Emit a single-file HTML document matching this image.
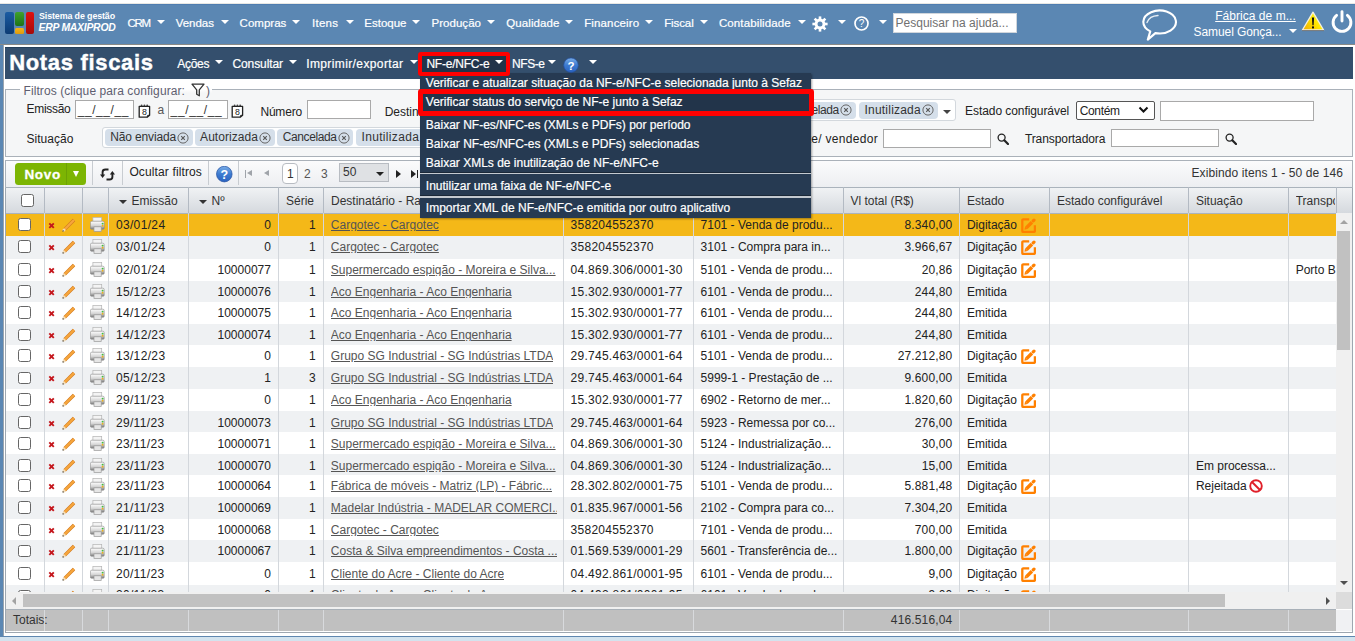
<!DOCTYPE html><html><head><meta charset="utf-8"><title>Notas fiscais</title><style>
*{margin:0;padding:0;box-sizing:border-box}
html,body{width:1355px;height:641px;overflow:hidden;background:#fff;font-family:"Liberation Sans", sans-serif;position:relative}
.abs{position:absolute}
.t{position:absolute;white-space:nowrap;line-height:1}
</style></head><body>
<div class="abs" style="left:0px;top:0px;width:1355px;height:4px;background:#fff"></div>
<div class="abs" style="left:0px;top:3px;width:1355px;height:1px;background:#e8e8e4"></div>
<div class="abs" style="left:0px;top:4px;width:1355px;height:41px;background:#5b87b3"></div>
<div class="abs" style="left:0px;top:4px;width:1355px;height:1px;background:#4f7db0"></div>
<div class="abs" style="left:5px;top:12px;width:8.5px;height:21.5px;border-radius:2px;background:linear-gradient(#1b5ca3,#0c3b74)"></div>
<div class="abs" style="left:15.3px;top:12px;width:8.4px;height:14px;border-radius:2px;background:linear-gradient(#3fa22c,#1d7318)"></div>
<div class="abs" style="left:15.3px;top:27.5px;width:8.4px;height:6.2px;border-radius:1.5px;background:linear-gradient(#f5b516,#dc9a10)"></div>
<div class="abs" style="left:25.7px;top:12px;width:8.3px;height:21.5px;border-radius:2px;background:linear-gradient(#e0120f,#a50a0a)"></div>
<div class="t" id="f0" style="top:11.77px;font-size:8.9px;color:#fff;left:39.00px;font-weight:bold;letter-spacing:-0.114px;">Sistema de gestão</div>
<div class="t" id="f1" style="top:22.90px;font-size:10.4px;color:#fff;left:38.50px;font-weight:bold;font-style:italic;letter-spacing:-0.240px;">ERP MAXIPROD</div>
<div class="t" id="f2" style="top:17.77px;font-size:11.5px;color:#fff;left:127.40px;letter-spacing:-1.201px;-webkit-text-stroke:0.2px #fff;">CRM</div>
<div class="abs" style="left:157px;top:19.6px;width:0;height:0;border-left:4.0px solid transparent;border-right:4.0px solid transparent;border-top:4px solid #fff"></div>
<div class="t" id="f3" style="top:17.77px;font-size:11.5px;color:#fff;left:175.70px;letter-spacing:-0.012px;-webkit-text-stroke:0.2px #fff;">Vendas</div>
<div class="abs" style="left:221px;top:19.6px;width:0;height:0;border-left:4.0px solid transparent;border-right:4.0px solid transparent;border-top:4px solid #fff"></div>
<div class="t" id="f4" style="top:17.77px;font-size:11.5px;color:#fff;left:239.60px;letter-spacing:0.021px;-webkit-text-stroke:0.2px #fff;">Compras</div>
<div class="abs" style="left:292px;top:19.6px;width:0;height:0;border-left:4.0px solid transparent;border-right:4.0px solid transparent;border-top:4px solid #fff"></div>
<div class="t" id="f5" style="top:17.77px;font-size:11.5px;color:#fff;left:311.90px;letter-spacing:0.312px;-webkit-text-stroke:0.2px #fff;">Itens</div>
<div class="abs" style="left:345.5px;top:19.6px;width:0;height:0;border-left:4.0px solid transparent;border-right:4.0px solid transparent;border-top:4px solid #fff"></div>
<div class="t" id="f6" style="top:17.77px;font-size:11.5px;color:#fff;left:364.30px;letter-spacing:-0.000px;-webkit-text-stroke:0.2px #fff;">Estoque</div>
<div class="abs" style="left:412px;top:19.6px;width:0;height:0;border-left:4.0px solid transparent;border-right:4.0px solid transparent;border-top:4px solid #fff"></div>
<div class="t" id="f7" style="top:17.77px;font-size:11.5px;color:#fff;left:431.50px;letter-spacing:0.033px;-webkit-text-stroke:0.2px #fff;">Produção</div>
<div class="abs" style="left:487px;top:19.6px;width:0;height:0;border-left:4.0px solid transparent;border-right:4.0px solid transparent;border-top:4px solid #fff"></div>
<div class="t" id="f8" style="top:17.77px;font-size:11.5px;color:#fff;left:506.30px;letter-spacing:0.096px;-webkit-text-stroke:0.2px #fff;">Qualidade</div>
<div class="abs" style="left:565.4px;top:19.6px;width:0;height:0;border-left:4.0px solid transparent;border-right:4.0px solid transparent;border-top:4px solid #fff"></div>
<div class="t" id="f9" style="top:17.77px;font-size:11.5px;color:#fff;left:584.20px;letter-spacing:0.140px;-webkit-text-stroke:0.2px #fff;">Financeiro</div>
<div class="abs" style="left:645px;top:19.6px;width:0;height:0;border-left:4.0px solid transparent;border-right:4.0px solid transparent;border-top:4px solid #fff"></div>
<div class="t" id="f10" style="top:17.77px;font-size:11.5px;color:#fff;left:664.20px;letter-spacing:-0.105px;-webkit-text-stroke:0.2px #fff;">Fiscal</div>
<div class="abs" style="left:700px;top:19.6px;width:0;height:0;border-left:4.0px solid transparent;border-right:4.0px solid transparent;border-top:4px solid #fff"></div>
<div class="t" id="f11" style="top:17.77px;font-size:11.5px;color:#fff;left:718.90px;letter-spacing:0.127px;-webkit-text-stroke:0.2px #fff;">Contabilidade</div>
<div class="abs" style="left:797.5px;top:19.6px;width:0;height:0;border-left:4.0px solid transparent;border-right:4.0px solid transparent;border-top:4px solid #fff"></div>
<svg class="abs" style="left:812px;top:16px" width="16" height="16" viewBox="0 0 16 16"><g fill="#fff"><circle cx="8" cy="8" r="5.4"/>
<g id="gt"><rect x="6.7" y="0.4" width="2.6" height="3.4"/><rect x="6.7" y="12.2" width="2.6" height="3.4"/><rect x="0.4" y="6.7" width="3.4" height="2.6"/><rect x="12.2" y="6.7" width="3.4" height="2.6"/></g>
<g transform="rotate(45 8 8)"><rect x="6.7" y="0.4" width="2.6" height="3.4"/><rect x="6.7" y="12.2" width="2.6" height="3.4"/><rect x="0.4" y="6.7" width="3.4" height="2.6"/><rect x="12.2" y="6.7" width="3.4" height="2.6"/></g></g>
<circle cx="8" cy="8" r="2.5" fill="#5b87b3"/></svg>
<div class="abs" style="left:838px;top:19.6px;width:0;height:0;border-left:4.0px solid transparent;border-right:4.0px solid transparent;border-top:4px solid #fff"></div>
<svg class="abs" style="left:853.5px;top:16.3px" width="15" height="15" viewBox="0 0 15 15"><circle cx="7.5" cy="7.5" r="6.5" fill="none" stroke="#fff" stroke-width="1.7"/>
<text x="7.6" y="11.2" text-anchor="middle" font-family="Liberation Sans" font-size="10" fill="#fff">?</text></svg>
<div class="abs" style="left:879px;top:19.6px;width:0;height:0;border-left:4.0px solid transparent;border-right:4.0px solid transparent;border-top:4px solid #fff"></div>
<div class="abs" style="left:893px;top:13px;width:124px;height:20px;background:#fff;border:1px solid #d0d6dc"></div>
<div class="t" id="f12" style="top:16.84px;font-size:12px;color:#707070;left:895.50px;letter-spacing:0.012px;">Pesquisar na ajuda...</div>
<svg class="abs" style="left:1141px;top:8px" width="38" height="34" viewBox="0 0 38 34"><path d="M14.4 25.1 A16.3 11.5 0 1 0 9.25 23.4 L6.8 31.6 L14.4 25.1 Z" fill="none" stroke="#fff" stroke-width="2.1" stroke-linejoin="round"/>
<path d="M6 14.5 C7.5 10.5 11.5 7.8 17 7.5" fill="none" stroke="#fff" stroke-width="1.4" stroke-linecap="round" opacity="0.85"/></svg>
<div class="t" id="f13" style="top:9.64px;font-size:12px;color:#fff;left:1215.20px;letter-spacing:0.038px;text-decoration:underline;">Fábrica de m...</div>
<div class="t" id="f14" style="top:26.24px;font-size:12px;color:#fff;left:1193.60px;letter-spacing:-0.093px;">Samuel Gonça...</div>
<div class="abs" style="left:1288.5px;top:29px;width:0;height:0;border-left:4.0px solid transparent;border-right:4.0px solid transparent;border-top:4.5px solid #fff"></div>
<svg class="abs" style="left:1301px;top:10.5px" width="24" height="21" viewBox="0 0 24 21"><defs><linearGradient id="wg" x1="0" y1="1" x2="1" y2="0.3"><stop offset="0" stop-color="#f0a800"/><stop offset="0.6" stop-color="#ffe600"/><stop offset="1" stop-color="#ffff40"/></linearGradient></defs>
<path d="M12 1.2 L22.6 19 L1.4 19 Z" fill="url(#wg)" stroke="#f4f0e0" stroke-width="1.3" stroke-linejoin="round"/><path d="M1 19.6 L23 19.6" stroke="#6a6a6a" stroke-width="0.9"/><path d="M10.9 6.5 L13.1 6.5 L12.6 14.3 L11.4 14.3 Z" fill="#111"/><rect x="11" y="15.4" width="2" height="2" fill="#111"/></svg>
<svg class="abs" style="left:1331px;top:10px" width="22" height="24" viewBox="0 0 22 24"><path d="M5.6 5.4 A8.9 8.9 0 1 0 16.4 5.4" fill="none" stroke="#fff" stroke-width="2.9" stroke-linecap="round"/><line x1="11" y1="1.7" x2="11" y2="11" stroke="#fff" stroke-width="2.9" stroke-linecap="round"/></svg>
<div class="abs" style="left:0px;top:45px;width:2.5px;height:596px;background:#5b87b3"></div>
<div class="abs" style="left:2.5px;top:45px;width:0.8px;height:591px;background:#9aa4ae"></div>
<div class="abs" style="left:0px;top:44.3px;width:1355px;height:0.8px;background:#8a8a86"></div>
<div class="abs" style="left:0px;top:635.5px;width:1355px;height:1.5px;background:#5f87b0"></div>
<div class="abs" style="left:0px;top:637px;width:1355px;height:4px;background:#d3e3ee"></div>
<div class="abs" style="left:5px;top:47px;width:1348px;height:31.7px;background:#344f6d"></div>
<div class="abs" style="left:5px;top:47px;width:1348px;height:1px;background:#24405c"></div>
<div class="t" id="f15" style="top:51.98px;font-size:22px;color:#fff;left:9.20px;font-weight:bold;letter-spacing:0.674px;-webkit-text-stroke:0.4px #fff;">Notas fiscais</div>
<div class="abs" style="left:5px;top:89px;width:1348px;height:67.6px;background:#f5f6f7;border:1px solid #aab1b9"></div>
<div class="abs" style="left:20px;top:85px;width:191.5px;height:6px;background:#fff"></div>
<div class="abs" style="left:20px;top:89px;width:191.5px;height:4px;background:linear-gradient(#fff,#f5f6f7)"></div>
<div class="t" id="f16" style="top:84.84px;font-size:12px;color:#5e5e70;left:23.50px;letter-spacing:0.086px;">Filtros (clique para configurar:</div>
<svg class="abs" style="left:190.5px;top:83px" width="14" height="14" viewBox="0 0 14 14"><path d="M1 1.2 L13 1.2 L8.3 6.8 L8.3 12.8 L5.7 11.3 L5.7 6.8 Z" fill="none" stroke="#333" stroke-width="1.3" stroke-linejoin="round"/></svg>
<div class="t" style="top:85.34px;font-size:12px;color:#5e5e70;left:206.00px;">)</div>
<div class="t" id="f17" style="top:103.24px;font-size:12px;color:#222;left:26.50px;letter-spacing:-0.288px;">Emissão</div>
<div class="abs" style="left:75.2px;top:100.3px;width:59.2px;height:19.1px;background:#fff;border:1px solid #a9a9a9"></div>
<div class="t" id="f18" style="top:103.84px;font-size:12px;color:#333;left:77.70px;letter-spacing:0.560px;">__/__/__</div>
<svg class="abs" style="left:137.8px;top:104px" width="13" height="14" viewBox="0 0 13 14"><path d="M1.2 2.4 L11.6 2.4 L11.6 11.2 L9.2 13.2 L1.2 13.2 Z" fill="#fff" stroke="#222" stroke-width="1.3" stroke-linejoin="round"/><path d="M9.2 13.2 L9.6 11.4 L11.6 11.2" fill="none" stroke="#222" stroke-width="1"/><circle cx="3.6" cy="1.3" r="0.9" fill="#444"/><circle cx="6.4" cy="1.3" r="0.9" fill="#444"/><circle cx="9.2" cy="1.3" r="0.9" fill="#444"/><text x="6.4" y="10.9" text-anchor="middle" font-family="Liberation Sans" font-size="8.8" fill="#222">8</text></svg>
<div class="t" style="top:103.84px;font-size:12px;color:#555;left:157.50px;">a</div>
<div class="abs" style="left:168.1px;top:100.3px;width:59.8px;height:19.1px;background:#fff;border:1px solid #a9a9a9"></div>
<div class="t" id="f19" style="top:103.84px;font-size:12px;color:#333;left:170.60px;letter-spacing:0.635px;">__/__/__</div>
<svg class="abs" style="left:230.8px;top:104px" width="13" height="14" viewBox="0 0 13 14"><path d="M1.2 2.4 L11.6 2.4 L11.6 11.2 L9.2 13.2 L1.2 13.2 Z" fill="#fff" stroke="#222" stroke-width="1.3" stroke-linejoin="round"/><path d="M9.2 13.2 L9.6 11.4 L11.6 11.2" fill="none" stroke="#222" stroke-width="1"/><circle cx="3.6" cy="1.3" r="0.9" fill="#444"/><circle cx="6.4" cy="1.3" r="0.9" fill="#444"/><circle cx="9.2" cy="1.3" r="0.9" fill="#444"/><text x="6.4" y="10.9" text-anchor="middle" font-family="Liberation Sans" font-size="8.8" fill="#222">8</text></svg>
<div class="t" id="f20" style="top:105.54px;font-size:12px;color:#222;left:260.40px;letter-spacing:-0.181px;">Número</div>
<div class="abs" style="left:307px;top:100.3px;width:63.5px;height:19.1px;background:#fff;border:1px solid #a9a9a9"></div>
<div class="t" style="top:105.54px;font-size:12px;color:#222;left:384.70px;">Destinatário</div>
<div class="abs" style="left:700px;top:99.2px;width:256px;height:22.1px;background:#fff;border:1px solid #d3d8dd;border-radius:3px"></div>
<div class="abs" style="left:780px;top:102.2px;width:75.5px;height:16.5px;background:#d5dfea;border-radius:4px"></div>
<div class="t" id="f21" style="top:103.54px;font-size:12px;color:#333;left:785.30px;letter-spacing:-0.442px;">Cancelada</div>
<svg class="abs" style="left:839.90px;top:104.45px" width="12" height="12" viewBox="0 0 12 12"><circle cx="6" cy="6" r="5.1" fill="none" stroke="#666" stroke-width="1"/><path d="M4.2 4.2 L7.8 7.8 M7.8 4.2 L4.2 7.8" stroke="#555" stroke-width="1.1"/></svg>
<div class="abs" style="left:859.2px;top:102.2px;width:78.5px;height:16.5px;background:#d5dfea;border-radius:4px"></div>
<div class="t" id="f22" style="top:103.54px;font-size:12px;color:#333;left:864.50px;letter-spacing:0.214px;">Inutilizada</div>
<svg class="abs" style="left:922.10px;top:104.45px" width="12" height="12" viewBox="0 0 12 12"><circle cx="6" cy="6" r="5.1" fill="none" stroke="#666" stroke-width="1"/><path d="M4.2 4.2 L7.8 7.8 M7.8 4.2 L4.2 7.8" stroke="#555" stroke-width="1.1"/></svg>
<div class="abs" style="left:943px;top:110.2px;width:0;height:0;border-left:4.0px solid transparent;border-right:4.0px solid transparent;border-top:4px solid #444"></div>
<div class="t" id="f23" style="top:104.94px;font-size:12px;color:#222;left:965.10px;letter-spacing:-0.074px;">Estado configurável</div>
<div class="abs" style="left:1075.5px;top:100.5px;width:79px;height:19px;background:#fff;border:1px solid #555;border-radius:2px"></div>
<div class="t" id="f24" style="top:104.84px;font-size:12px;color:#222;left:1079.70px;letter-spacing:-0.339px;">Contém</div>
<svg class="abs" style="left:1137.5px;top:106px" width="11" height="8" viewBox="0 0 11 8"><path d="M1.5 1.5 L5.5 5.5 L9.5 1.5" fill="none" stroke="#111" stroke-width="2"/></svg>
<div class="abs" style="left:1160.3px;top:101.3px;width:153.3px;height:19.4px;background:#fff;border:1px solid #a9a9a9"></div>
<div class="t" id="f25" style="top:133.04px;font-size:12px;color:#222;left:26.50px;letter-spacing:0.037px;">Situação</div>
<div class="abs" style="left:101.6px;top:126.6px;width:700px;height:21.8px;background:#fff;border:1px solid #d3d8dd;border-radius:3px"></div>
<div class="abs" style="left:105.0px;top:129px;width:87.8px;height:17px;background:#d5dfea;border-radius:4px"></div>
<div class="t" id="f26" style="top:130.64px;font-size:12px;color:#333;left:110.30px;letter-spacing:-0.154px;">Não enviada</div>
<svg class="abs" style="left:177.20px;top:131.50px" width="12" height="12" viewBox="0 0 12 12"><circle cx="6" cy="6" r="5.1" fill="none" stroke="#666" stroke-width="1"/><path d="M4.2 4.2 L7.8 7.8 M7.8 4.2 L4.2 7.8" stroke="#555" stroke-width="1.1"/></svg>
<div class="abs" style="left:194.8px;top:129px;width:79.9px;height:17px;background:#d5dfea;border-radius:4px"></div>
<div class="t" id="f27" style="top:130.64px;font-size:12px;color:#333;left:200.10px;letter-spacing:0.042px;">Autorizada</div>
<svg class="abs" style="left:259.10px;top:131.50px" width="12" height="12" viewBox="0 0 12 12"><circle cx="6" cy="6" r="5.1" fill="none" stroke="#666" stroke-width="1"/><path d="M4.2 4.2 L7.8 7.8 M7.8 4.2 L4.2 7.8" stroke="#555" stroke-width="1.1"/></svg>
<div class="abs" style="left:277.4px;top:129px;width:76.0px;height:17px;background:#d5dfea;border-radius:4px"></div>
<div class="t" id="f28" style="top:130.64px;font-size:12px;color:#333;left:282.70px;letter-spacing:-0.386px;">Cancelada</div>
<svg class="abs" style="left:337.80px;top:131.50px" width="12" height="12" viewBox="0 0 12 12"><circle cx="6" cy="6" r="5.1" fill="none" stroke="#666" stroke-width="1"/><path d="M4.2 4.2 L7.8 7.8 M7.8 4.2 L4.2 7.8" stroke="#555" stroke-width="1.1"/></svg>
<div class="abs" style="left:356.2px;top:129px;width:79.8px;height:17px;background:#d5dfea;border-radius:4px"></div>
<div class="t" id="f29" style="top:130.64px;font-size:12px;color:#333;left:361.50px;letter-spacing:0.332px;">Inutilizada</div>
<svg class="abs" style="left:420.40px;top:131.50px" width="12" height="12" viewBox="0 0 12 12"><circle cx="6" cy="6" r="5.1" fill="none" stroke="#666" stroke-width="1"/><path d="M4.2 4.2 L7.8 7.8 M7.8 4.2 L4.2 7.8" stroke="#555" stroke-width="1.1"/></svg>
<div class="t" style="top:133.14px;font-size:12px;color:#222;right:477.00px;letter-spacing:0.300px;">Representante/ vendedor</div>
<div class="abs" style="left:882.5px;top:128.5px;width:108px;height:19.1px;background:#fff;border:1px solid #a9a9a9"></div>
<svg class="abs" style="left:996.5px;top:133px" width="12" height="12" viewBox="0 0 12 12"><circle cx="4.6" cy="4.6" r="3.5" fill="none" stroke="#222" stroke-width="1.3"/><line x1="7.3" y1="7.3" x2="11" y2="11" stroke="#222" stroke-width="2.2" stroke-linecap="round"/></svg>
<div class="t" id="f30" style="top:133.14px;font-size:12px;color:#222;left:1024.90px;letter-spacing:-0.079px;">Transportadora</div>
<div class="abs" style="left:1110.6px;top:128.5px;width:108.2px;height:18.6px;background:#fff;border:1px solid #a9a9a9"></div>
<svg class="abs" style="left:1224.8px;top:133px" width="12" height="12" viewBox="0 0 12 12"><circle cx="4.6" cy="4.6" r="3.5" fill="none" stroke="#222" stroke-width="1.3"/><line x1="7.3" y1="7.3" x2="11" y2="11" stroke="#222" stroke-width="2.2" stroke-linecap="round"/></svg>
<div class="abs" style="left:5px;top:159.5px;width:1348px;height:28.5px;background:linear-gradient(#fbfbfc,#eceef1);border:1px solid #aab1b9;border-bottom:none"></div>
<div class="abs" style="left:15px;top:163px;width:70.7px;height:21.6px;background:#7cb503;border-radius:3.5px"></div>
<div class="abs" style="left:66px;top:163px;width:1px;height:21.6px;background:#6da204"></div>
<div class="t" id="f31" style="top:167.57px;font-size:13.5px;color:#fff;left:24.40px;font-weight:bold;letter-spacing:0.688px;-webkit-text-stroke:0.3px #fff;">Novo</div>
<div class="abs" style="left:72.5px;top:171px;width:0;height:0;border-left:3.5px solid transparent;border-right:3.5px solid transparent;border-top:6px solid #fff"></div>
<div class="abs" style="left:92px;top:160.5px;width:1px;height:24px;background:#c8ccd1"></div>
<div class="abs" style="left:122px;top:160.5px;width:1px;height:24px;background:#c8ccd1"></div>
<div class="abs" style="left:208px;top:160.5px;width:1px;height:24px;background:#c8ccd1"></div>
<div class="abs" style="left:238px;top:160.5px;width:1px;height:24px;background:#c8ccd1"></div>
<svg class="abs" style="left:99.5px;top:166.5px" width="15" height="15" viewBox="0 0 15 15"><path d="M2.6 8.5 L2.6 5 C2.6 3.3 4 2.5 5.5 2.5 L8.5 2.5" fill="none" stroke="#222" stroke-width="1.9"/><path d="M0 7.5 L2.6 11 L5.2 7.5 Z" fill="#222"/>
<path d="M12.4 6.5 L12.4 10 C12.4 11.7 11 12.5 9.5 12.5 L6.5 12.5" fill="none" stroke="#222" stroke-width="1.9"/><path d="M9.8 7.5 L12.4 4 L15 7.5 Z" fill="#222"/></svg>
<div class="t" id="f32" style="top:166.34px;font-size:12px;color:#222;left:129.40px;letter-spacing:0.127px;">Ocultar filtros</div>
<svg class="abs" style="left:215.5px;top:165.8px" width="17" height="17" viewBox="0 0 17 17"><defs><linearGradient id="hg2" x1="0" y1="0" x2="0" y2="1"><stop offset="0" stop-color="#7aaee8"/><stop offset="0.5" stop-color="#3d7bd0"/><stop offset="1" stop-color="#2a62c0"/></linearGradient></defs><circle cx="8.3" cy="8.1" r="7.8" fill="url(#hg2)" stroke="#2450a0" stroke-width="0.7"/><text x="8.3" y="12.8" text-anchor="middle" font-family="Liberation Sans" font-size="12.5" font-weight="bold" fill="#fff">?</text></svg>
<div class="abs" style="left:244.6px;top:170px;width:1.5px;height:7.5px;background:#a0a4aa"></div>
<div class="abs" style="left:246.5px;top:170px;width:0;height:0;border-top:3.75px solid transparent;border-bottom:3.75px solid transparent;border-right:5px solid #a0a4aa"></div>
<div class="abs" style="left:264px;top:170px;width:0;height:0;border-top:3.75px solid transparent;border-bottom:3.75px solid transparent;border-right:5px solid #a0a4aa"></div>
<div class="abs" style="left:282.3px;top:163.1px;width:16.2px;height:21.1px;background:#fff;border:1px solid #b8bcc2;border-radius:4px"></div>
<div class="t" style="top:167.84px;font-size:12px;color:#333;left:287.00px;">1</div>
<div class="t" style="top:167.84px;font-size:12px;color:#555;left:304.00px;">2</div>
<div class="t" style="top:167.84px;font-size:12px;color:#555;left:321.00px;">3</div>
<div class="abs" style="left:339px;top:163px;width:49.6px;height:18.5px;background:#dfe1e4;border:1px solid #b8bcc2"></div>
<div class="t" style="top:166.34px;font-size:12px;color:#333;left:343.00px;">50</div>
<div class="abs" style="left:375.5px;top:172px;width:0;height:0;border-left:4.0px solid transparent;border-right:4.0px solid transparent;border-top:4.5px solid #222"></div>
<div class="abs" style="left:396px;top:170px;width:0;height:0;border-top:4px solid transparent;border-bottom:4px solid transparent;border-left:5px solid #222"></div>
<div class="abs" style="left:411px;top:170px;width:0;height:0;border-top:4px solid transparent;border-bottom:4px solid transparent;border-left:5px solid #222"></div>
<div class="abs" style="left:416.5px;top:170px;width:1.5px;height:8px;background:#222"></div>
<div class="t" id="f33" style="top:167.04px;font-size:12px;color:#333;left:1191.50px;letter-spacing:0.101px;">Exibindo itens 1 - 50 de 146</div>
<div class="abs" style="left:5px;top:187px;width:1348px;height:27px;background:linear-gradient(#f0f2f4,#d5d9de);border-top:1px solid #aab3bc;border-bottom:1px solid #aab3bc"></div>
<div class="abs" style="left:44px;top:187px;width:1px;height:27px;background:#b3bac3"></div>
<div class="abs" style="left:82px;top:187px;width:1px;height:27px;background:#b3bac3"></div>
<div class="abs" style="left:108px;top:187px;width:1px;height:27px;background:#b3bac3"></div>
<div class="abs" style="left:188px;top:187px;width:1px;height:27px;background:#b3bac3"></div>
<div class="abs" style="left:278px;top:187px;width:1px;height:27px;background:#b3bac3"></div>
<div class="abs" style="left:323px;top:187px;width:1px;height:27px;background:#b3bac3"></div>
<div class="abs" style="left:563px;top:187px;width:1px;height:27px;background:#b3bac3"></div>
<div class="abs" style="left:693px;top:187px;width:1px;height:27px;background:#b3bac3"></div>
<div class="abs" style="left:843px;top:187px;width:1px;height:27px;background:#b3bac3"></div>
<div class="abs" style="left:959px;top:187px;width:1px;height:27px;background:#b3bac3"></div>
<div class="abs" style="left:1049px;top:187px;width:1px;height:27px;background:#b3bac3"></div>
<div class="abs" style="left:1188px;top:187px;width:1px;height:27px;background:#b3bac3"></div>
<div class="abs" style="left:1288px;top:187px;width:1px;height:27px;background:#b3bac3"></div>
<div class="abs" style="left:1335.5px;top:187px;width:1px;height:27px;background:#b3bac3"></div>
<div class="abs" style="left:21.3px;top:194px;width:12.6px;height:12.7px;background:#fff;border:1px solid #666;border-radius:2.5px"></div>
<div class="abs" style="left:118.69999999999999px;top:200px;width:0;height:0;border-left:4.5px solid transparent;border-right:4.5px solid transparent;border-top:4.5px solid #333"></div>
<div class="t" style="top:195.14px;font-size:12px;color:#333;left:131.60px;">Emissão</div>
<div class="abs" style="left:198.7px;top:200px;width:0;height:0;border-left:4.5px solid transparent;border-right:4.5px solid transparent;border-top:4.5px solid #333"></div>
<div class="t" style="top:195.14px;font-size:12px;color:#333;left:211.60px;">Nº</div>
<div class="t" style="top:195.14px;font-size:12px;color:#333;left:286.00px;">Série</div>
<div class="t" style="top:195.14px;font-size:12px;color:#333;left:331.00px;">Destinatário - Razão social</div>
<div class="t" style="top:195.14px;font-size:12px;color:#333;left:571.00px;">CNPJ/CPF</div>
<div class="t" style="top:195.14px;font-size:12px;color:#333;left:701.00px;">Natureza</div>
<div class="t" style="top:195.14px;font-size:12px;color:#333;left:850.50px;">Vl total (R$)</div>
<div class="t" style="top:195.14px;font-size:12px;color:#333;left:966.90px;">Estado</div>
<div class="t" style="top:195.14px;font-size:12px;color:#333;left:1057.00px;">Estado configurável</div>
<div class="t" style="top:195.14px;font-size:12px;color:#333;left:1195.90px;">Situação</div>
<div class="t" style="top:195.14px;font-size:12px;color:#333;left:1295.70px;width:39.5px;overflow:hidden;">Transportadora</div>
<div class="abs" style="left:0;top:213.0px;width:1335.5px;height:379.0px;overflow:hidden">
<div class="abs" style="left:5.5px;top:1.0px;width:1330px;height:22px;background:#f4b818"></div>
<div class="abs" style="left:5.5px;top:23.0px;width:1330px;height:23px;background:#eff1f3"></div>
<div class="abs" style="left:5.5px;top:46.0px;width:1330px;height:22px;background:#ffffff"></div>
<div class="abs" style="left:5.5px;top:68.0px;width:1330px;height:21px;background:#eff1f3"></div>
<div class="abs" style="left:5.5px;top:89.0px;width:1330px;height:22px;background:#ffffff"></div>
<div class="abs" style="left:5.5px;top:111.0px;width:1330px;height:21px;background:#eff1f3"></div>
<div class="abs" style="left:5.5px;top:132.0px;width:1330px;height:22px;background:#ffffff"></div>
<div class="abs" style="left:5.5px;top:154.0px;width:1330px;height:22px;background:#eff1f3"></div>
<div class="abs" style="left:5.5px;top:176.0px;width:1330px;height:22px;background:#ffffff"></div>
<div class="abs" style="left:5.5px;top:198.0px;width:1330px;height:21px;background:#eff1f3"></div>
<div class="abs" style="left:5.5px;top:219.0px;width:1330px;height:22px;background:#ffffff"></div>
<div class="abs" style="left:5.5px;top:241.0px;width:1330px;height:21px;background:#eff1f3"></div>
<div class="abs" style="left:5.5px;top:262.0px;width:1330px;height:22px;background:#ffffff"></div>
<div class="abs" style="left:5.5px;top:284.0px;width:1330px;height:22px;background:#eff1f3"></div>
<div class="abs" style="left:5.5px;top:306.0px;width:1330px;height:21px;background:#ffffff"></div>
<div class="abs" style="left:5.5px;top:327.0px;width:1330px;height:22px;background:#eff1f3"></div>
<div class="abs" style="left:5.5px;top:349.0px;width:1330px;height:23px;background:#ffffff"></div>
<div class="abs" style="left:5.5px;top:372.0px;width:1330px;height:22px;background:#eff1f3"></div>
<div class="abs" style="left:44px;top:0px;width:1px;height:379.0px;background:#d3d7dc"></div>
<div class="abs" style="left:82px;top:0px;width:1px;height:379.0px;background:#d3d7dc"></div>
<div class="abs" style="left:108px;top:0px;width:1px;height:379.0px;background:#d3d7dc"></div>
<div class="abs" style="left:188px;top:0px;width:1px;height:379.0px;background:#d3d7dc"></div>
<div class="abs" style="left:278px;top:0px;width:1px;height:379.0px;background:#d3d7dc"></div>
<div class="abs" style="left:323px;top:0px;width:1px;height:379.0px;background:#d3d7dc"></div>
<div class="abs" style="left:563px;top:0px;width:1px;height:379.0px;background:#d3d7dc"></div>
<div class="abs" style="left:693px;top:0px;width:1px;height:379.0px;background:#d3d7dc"></div>
<div class="abs" style="left:843px;top:0px;width:1px;height:379.0px;background:#d3d7dc"></div>
<div class="abs" style="left:959px;top:0px;width:1px;height:379.0px;background:#d3d7dc"></div>
<div class="abs" style="left:1049px;top:0px;width:1px;height:379.0px;background:#d3d7dc"></div>
<div class="abs" style="left:1188px;top:0px;width:1px;height:379.0px;background:#d3d7dc"></div>
<div class="abs" style="left:1288px;top:0px;width:1px;height:379.0px;background:#d3d7dc"></div>
<div class="abs" style="left:18.2px;top:5.3px;width:12.8px;height:12.7px;background:#fff;border:1px solid #666;border-radius:2.5px"></div>
<svg class="abs" style="left:48.2px;top:9.10px" width="7" height="7" viewBox="0 0 7 7"><path d="M1.3 1.3 L5.8 5.8 M5.8 1.3 L1.3 5.8" stroke="#c4161c" stroke-width="1.9" stroke-linecap="butt"/></svg>
<svg class="abs" style="left:61.5px;top:5.00px" width="14" height="14" viewBox="0 0 14 14"><path d="M2.6 11.4 L12 2" stroke="#d07a20" stroke-width="3.4"/><path d="M2.6 11.4 L12 2" stroke="#f7a63c" stroke-width="2.2"/><path d="M0.9 13.1 L2.9 11.1" stroke="#f3dcb6" stroke-width="2.6"/><circle cx="1.1" cy="12.9" r="0.65" fill="#222"/></svg>
<svg class="abs" style="left:89.5px;top:4.10px" width="15" height="15" viewBox="0 0 15 15"><defs><linearGradient id="pg0" x1="0" y1="0" x2="0" y2="1"><stop offset="0" stop-color="#ffffff"/><stop offset="0.55" stop-color="#d4d4d4"/><stop offset="1" stop-color="#7a7a7a"/></linearGradient></defs><rect x="2.9" y="0.4" width="8.8" height="4.2" fill="#f4f4f4" stroke="#b4b4b4" stroke-width="0.7"/><path d="M0.4 5.6 Q0.4 4.2 1.8 4.2 L12.8 4.2 Q14.2 4.2 14.2 5.6 L14.2 11.2 Q14.2 12.2 13.2 12.2 L1.4 12.2 Q0.4 12.2 0.4 11.2 Z" fill="url(#pg0)" stroke="#8a8a8a" stroke-width="0.6"/><rect x="4" y="9.8" width="7.2" height="4.6" fill="#e6e6e6" stroke="#9a9a9a" stroke-width="0.7"/><circle cx="12.6" cy="6.6" r="0.95" fill="#3fbf3f"/><circle cx="12.6" cy="8.8" r="0.95" fill="#e8b020"/></svg>
<div class="t" style="top:5.94px;font-size:12px;color:#222;left:115.90px;letter-spacing:0.350px;">03/01/24</div>
<div class="t" style="top:5.94px;font-size:12px;color:#222;right:1064.60px;">0</div>
<div class="t" style="top:5.94px;font-size:12px;color:#222;right:1019.80px;">1</div>
<div class="t" style="top:5.94px;font-size:12px;color:#555;left:330.80px;text-decoration:underline;max-width:226px;overflow:hidden;">Cargotec - Cargotec</div>
<div class="t" style="top:5.94px;font-size:12px;color:#222;left:570.60px;letter-spacing:0.260px;">358204552370</div>
<div class="t" style="top:5.94px;font-size:12px;color:#222;left:700.60px;">7101 - Venda de produ...</div>
<div class="t" style="top:5.94px;font-size:12px;color:#222;right:383.10px;letter-spacing:0.150px;">8.340,00</div>
<div class="t" style="top:5.94px;font-size:12px;color:#222;left:966.90px;">Digitação</div>
<svg class="abs" style="left:1020.5px;top:5.20px" width="15" height="15" viewBox="0 0 15 15"><path d="M8.2 1.3 L2.3 1.3 Q1.3 1.3 1.3 2.3 L1.3 12.9 Q1.3 13.9 2.3 13.9 L12.9 13.9 Q13.9 13.9 13.9 12.9 L13.9 7.2" fill="none" stroke="#ff8000" stroke-width="2.3"/><path d="M5.4 9.7 L10.9 4.2" stroke="#ff8000" stroke-width="3.4"/><path d="M3.4 11.8 L4.1 8.6 L6.6 11.1 Z" fill="#ff8000"/><path d="M12.2 2.9 L13 2.1" stroke="#ff8000" stroke-width="3.2" stroke-linecap="round"/></svg>
<div class="abs" style="left:18.2px;top:27.4px;width:12.8px;height:12.7px;background:#fff;border:1px solid #666;border-radius:2.5px"></div>
<svg class="abs" style="left:48.2px;top:31.20px" width="7" height="7" viewBox="0 0 7 7"><path d="M1.3 1.3 L5.8 5.8 M5.8 1.3 L1.3 5.8" stroke="#c4161c" stroke-width="1.9" stroke-linecap="butt"/></svg>
<svg class="abs" style="left:61.5px;top:27.10px" width="14" height="14" viewBox="0 0 14 14"><path d="M2.6 11.4 L12 2" stroke="#d07a20" stroke-width="3.4"/><path d="M2.6 11.4 L12 2" stroke="#f7a63c" stroke-width="2.2"/><path d="M0.9 13.1 L2.9 11.1" stroke="#f3dcb6" stroke-width="2.6"/><circle cx="1.1" cy="12.9" r="0.65" fill="#222"/></svg>
<svg class="abs" style="left:89.5px;top:26.20px" width="15" height="15" viewBox="0 0 15 15"><defs><linearGradient id="pg1" x1="0" y1="0" x2="0" y2="1"><stop offset="0" stop-color="#ffffff"/><stop offset="0.55" stop-color="#d4d4d4"/><stop offset="1" stop-color="#7a7a7a"/></linearGradient></defs><rect x="2.9" y="0.4" width="8.8" height="4.2" fill="#f4f4f4" stroke="#b4b4b4" stroke-width="0.7"/><path d="M0.4 5.6 Q0.4 4.2 1.8 4.2 L12.8 4.2 Q14.2 4.2 14.2 5.6 L14.2 11.2 Q14.2 12.2 13.2 12.2 L1.4 12.2 Q0.4 12.2 0.4 11.2 Z" fill="url(#pg1)" stroke="#8a8a8a" stroke-width="0.6"/><rect x="4" y="9.8" width="7.2" height="4.6" fill="#e6e6e6" stroke="#9a9a9a" stroke-width="0.7"/><circle cx="12.6" cy="6.6" r="0.95" fill="#3fbf3f"/><circle cx="12.6" cy="8.8" r="0.95" fill="#e8b020"/></svg>
<div class="t" style="top:28.04px;font-size:12px;color:#222;left:115.90px;letter-spacing:0.350px;">03/01/24</div>
<div class="t" style="top:28.04px;font-size:12px;color:#222;right:1064.60px;">0</div>
<div class="t" style="top:28.04px;font-size:12px;color:#222;right:1019.80px;">1</div>
<div class="t" style="top:28.04px;font-size:12px;color:#555;left:330.80px;text-decoration:underline;max-width:226px;overflow:hidden;">Cargotec - Cargotec</div>
<div class="t" style="top:28.04px;font-size:12px;color:#222;left:570.60px;letter-spacing:0.260px;">358204552370</div>
<div class="t" style="top:28.04px;font-size:12px;color:#222;left:700.60px;">3101 - Compra para in...</div>
<div class="t" style="top:28.04px;font-size:12px;color:#222;right:383.10px;letter-spacing:0.150px;">3.966,67</div>
<div class="t" style="top:28.04px;font-size:12px;color:#222;left:966.90px;">Digitação</div>
<svg class="abs" style="left:1020.5px;top:27.30px" width="15" height="15" viewBox="0 0 15 15"><path d="M8.2 1.3 L2.3 1.3 Q1.3 1.3 1.3 2.3 L1.3 12.9 Q1.3 13.9 2.3 13.9 L12.9 13.9 Q13.9 13.9 13.9 12.9 L13.9 7.2" fill="none" stroke="#ff8000" stroke-width="2.3"/><path d="M5.4 9.7 L10.9 4.2" stroke="#ff8000" stroke-width="3.4"/><path d="M3.4 11.8 L4.1 8.6 L6.6 11.1 Z" fill="#ff8000"/><path d="M12.2 2.9 L13 2.1" stroke="#ff8000" stroke-width="3.2" stroke-linecap="round"/></svg>
<div class="abs" style="left:18.2px;top:50.3px;width:12.8px;height:12.7px;background:#fff;border:1px solid #666;border-radius:2.5px"></div>
<svg class="abs" style="left:48.2px;top:54.10px" width="7" height="7" viewBox="0 0 7 7"><path d="M1.3 1.3 L5.8 5.8 M5.8 1.3 L1.3 5.8" stroke="#c4161c" stroke-width="1.9" stroke-linecap="butt"/></svg>
<svg class="abs" style="left:61.5px;top:50.00px" width="14" height="14" viewBox="0 0 14 14"><path d="M2.6 11.4 L12 2" stroke="#d07a20" stroke-width="3.4"/><path d="M2.6 11.4 L12 2" stroke="#f7a63c" stroke-width="2.2"/><path d="M0.9 13.1 L2.9 11.1" stroke="#f3dcb6" stroke-width="2.6"/><circle cx="1.1" cy="12.9" r="0.65" fill="#222"/></svg>
<svg class="abs" style="left:89.5px;top:49.10px" width="15" height="15" viewBox="0 0 15 15"><defs><linearGradient id="pg2" x1="0" y1="0" x2="0" y2="1"><stop offset="0" stop-color="#ffffff"/><stop offset="0.55" stop-color="#d4d4d4"/><stop offset="1" stop-color="#7a7a7a"/></linearGradient></defs><rect x="2.9" y="0.4" width="8.8" height="4.2" fill="#f4f4f4" stroke="#b4b4b4" stroke-width="0.7"/><path d="M0.4 5.6 Q0.4 4.2 1.8 4.2 L12.8 4.2 Q14.2 4.2 14.2 5.6 L14.2 11.2 Q14.2 12.2 13.2 12.2 L1.4 12.2 Q0.4 12.2 0.4 11.2 Z" fill="url(#pg2)" stroke="#8a8a8a" stroke-width="0.6"/><rect x="4" y="9.8" width="7.2" height="4.6" fill="#e6e6e6" stroke="#9a9a9a" stroke-width="0.7"/><circle cx="12.6" cy="6.6" r="0.95" fill="#3fbf3f"/><circle cx="12.6" cy="8.8" r="0.95" fill="#e8b020"/></svg>
<div class="t" style="top:50.94px;font-size:12px;color:#222;left:115.90px;letter-spacing:0.350px;">02/01/24</div>
<div class="t" style="top:50.94px;font-size:12px;color:#222;right:1064.60px;">10000077</div>
<div class="t" style="top:50.94px;font-size:12px;color:#222;right:1019.80px;">1</div>
<div class="t" style="top:50.94px;font-size:12px;color:#555;left:330.80px;text-decoration:underline;max-width:226px;overflow:hidden;">Supermercado espigão - Moreira e Silva...</div>
<div class="t" style="top:50.94px;font-size:12px;color:#222;left:570.60px;letter-spacing:0.260px;">04.869.306/0001-30</div>
<div class="t" style="top:50.94px;font-size:12px;color:#222;left:700.60px;">5101 - Venda de produ...</div>
<div class="t" style="top:50.94px;font-size:12px;color:#222;right:383.10px;letter-spacing:0.150px;">20,86</div>
<div class="t" style="top:50.94px;font-size:12px;color:#222;left:966.90px;">Digitação</div>
<svg class="abs" style="left:1020.5px;top:50.20px" width="15" height="15" viewBox="0 0 15 15"><path d="M8.2 1.3 L2.3 1.3 Q1.3 1.3 1.3 2.3 L1.3 12.9 Q1.3 13.9 2.3 13.9 L12.9 13.9 Q13.9 13.9 13.9 12.9 L13.9 7.2" fill="none" stroke="#ff8000" stroke-width="2.3"/><path d="M5.4 9.7 L10.9 4.2" stroke="#ff8000" stroke-width="3.4"/><path d="M3.4 11.8 L4.1 8.6 L6.6 11.1 Z" fill="#ff8000"/><path d="M12.2 2.9 L13 2.1" stroke="#ff8000" stroke-width="3.2" stroke-linecap="round"/></svg>
<div class="t" style="top:50.94px;font-size:12px;color:#222;left:1295.70px;width:40px;overflow:hidden;">Porto B</div>
<div class="abs" style="left:18.2px;top:72.4px;width:12.8px;height:12.7px;background:#fff;border:1px solid #666;border-radius:2.5px"></div>
<svg class="abs" style="left:48.2px;top:76.20px" width="7" height="7" viewBox="0 0 7 7"><path d="M1.3 1.3 L5.8 5.8 M5.8 1.3 L1.3 5.8" stroke="#c4161c" stroke-width="1.9" stroke-linecap="butt"/></svg>
<svg class="abs" style="left:61.5px;top:72.10px" width="14" height="14" viewBox="0 0 14 14"><path d="M2.6 11.4 L12 2" stroke="#d07a20" stroke-width="3.4"/><path d="M2.6 11.4 L12 2" stroke="#f7a63c" stroke-width="2.2"/><path d="M0.9 13.1 L2.9 11.1" stroke="#f3dcb6" stroke-width="2.6"/><circle cx="1.1" cy="12.9" r="0.65" fill="#222"/></svg>
<svg class="abs" style="left:89.5px;top:71.20px" width="15" height="15" viewBox="0 0 15 15"><defs><linearGradient id="pg3" x1="0" y1="0" x2="0" y2="1"><stop offset="0" stop-color="#ffffff"/><stop offset="0.55" stop-color="#d4d4d4"/><stop offset="1" stop-color="#7a7a7a"/></linearGradient></defs><rect x="2.9" y="0.4" width="8.8" height="4.2" fill="#f4f4f4" stroke="#b4b4b4" stroke-width="0.7"/><path d="M0.4 5.6 Q0.4 4.2 1.8 4.2 L12.8 4.2 Q14.2 4.2 14.2 5.6 L14.2 11.2 Q14.2 12.2 13.2 12.2 L1.4 12.2 Q0.4 12.2 0.4 11.2 Z" fill="url(#pg3)" stroke="#8a8a8a" stroke-width="0.6"/><rect x="4" y="9.8" width="7.2" height="4.6" fill="#e6e6e6" stroke="#9a9a9a" stroke-width="0.7"/><circle cx="12.6" cy="6.6" r="0.95" fill="#3fbf3f"/><circle cx="12.6" cy="8.8" r="0.95" fill="#e8b020"/></svg>
<div class="t" style="top:73.04px;font-size:12px;color:#222;left:115.90px;letter-spacing:0.350px;">15/12/23</div>
<div class="t" style="top:73.04px;font-size:12px;color:#222;right:1064.60px;">10000076</div>
<div class="t" style="top:73.04px;font-size:12px;color:#222;right:1019.80px;">1</div>
<div class="t" style="top:73.04px;font-size:12px;color:#555;left:330.80px;text-decoration:underline;max-width:226px;overflow:hidden;">Aco Engenharia - Aco Engenharia</div>
<div class="t" style="top:73.04px;font-size:12px;color:#222;left:570.60px;letter-spacing:0.260px;">15.302.930/0001-77</div>
<div class="t" style="top:73.04px;font-size:12px;color:#222;left:700.60px;">6101 - Venda de produ...</div>
<div class="t" style="top:73.04px;font-size:12px;color:#222;right:383.10px;letter-spacing:0.150px;">244,80</div>
<div class="t" style="top:73.04px;font-size:12px;color:#222;left:966.90px;">Emitida</div>
<div class="abs" style="left:18.2px;top:93.3px;width:12.8px;height:12.7px;background:#fff;border:1px solid #666;border-radius:2.5px"></div>
<svg class="abs" style="left:48.2px;top:97.10px" width="7" height="7" viewBox="0 0 7 7"><path d="M1.3 1.3 L5.8 5.8 M5.8 1.3 L1.3 5.8" stroke="#c4161c" stroke-width="1.9" stroke-linecap="butt"/></svg>
<svg class="abs" style="left:61.5px;top:93.00px" width="14" height="14" viewBox="0 0 14 14"><path d="M2.6 11.4 L12 2" stroke="#d07a20" stroke-width="3.4"/><path d="M2.6 11.4 L12 2" stroke="#f7a63c" stroke-width="2.2"/><path d="M0.9 13.1 L2.9 11.1" stroke="#f3dcb6" stroke-width="2.6"/><circle cx="1.1" cy="12.9" r="0.65" fill="#222"/></svg>
<svg class="abs" style="left:89.5px;top:92.10px" width="15" height="15" viewBox="0 0 15 15"><defs><linearGradient id="pg4" x1="0" y1="0" x2="0" y2="1"><stop offset="0" stop-color="#ffffff"/><stop offset="0.55" stop-color="#d4d4d4"/><stop offset="1" stop-color="#7a7a7a"/></linearGradient></defs><rect x="2.9" y="0.4" width="8.8" height="4.2" fill="#f4f4f4" stroke="#b4b4b4" stroke-width="0.7"/><path d="M0.4 5.6 Q0.4 4.2 1.8 4.2 L12.8 4.2 Q14.2 4.2 14.2 5.6 L14.2 11.2 Q14.2 12.2 13.2 12.2 L1.4 12.2 Q0.4 12.2 0.4 11.2 Z" fill="url(#pg4)" stroke="#8a8a8a" stroke-width="0.6"/><rect x="4" y="9.8" width="7.2" height="4.6" fill="#e6e6e6" stroke="#9a9a9a" stroke-width="0.7"/><circle cx="12.6" cy="6.6" r="0.95" fill="#3fbf3f"/><circle cx="12.6" cy="8.8" r="0.95" fill="#e8b020"/></svg>
<div class="t" style="top:93.94px;font-size:12px;color:#222;left:115.90px;letter-spacing:0.350px;">14/12/23</div>
<div class="t" style="top:93.94px;font-size:12px;color:#222;right:1064.60px;">10000075</div>
<div class="t" style="top:93.94px;font-size:12px;color:#222;right:1019.80px;">1</div>
<div class="t" style="top:93.94px;font-size:12px;color:#555;left:330.80px;text-decoration:underline;max-width:226px;overflow:hidden;">Aco Engenharia - Aco Engenharia</div>
<div class="t" style="top:93.94px;font-size:12px;color:#222;left:570.60px;letter-spacing:0.260px;">15.302.930/0001-77</div>
<div class="t" style="top:93.94px;font-size:12px;color:#222;left:700.60px;">6101 - Venda de produ...</div>
<div class="t" style="top:93.94px;font-size:12px;color:#222;right:383.10px;letter-spacing:0.150px;">244,80</div>
<div class="t" style="top:93.94px;font-size:12px;color:#222;left:966.90px;">Emitida</div>
<div class="abs" style="left:18.2px;top:115.6px;width:12.8px;height:12.7px;background:#fff;border:1px solid #666;border-radius:2.5px"></div>
<svg class="abs" style="left:48.2px;top:119.40px" width="7" height="7" viewBox="0 0 7 7"><path d="M1.3 1.3 L5.8 5.8 M5.8 1.3 L1.3 5.8" stroke="#c4161c" stroke-width="1.9" stroke-linecap="butt"/></svg>
<svg class="abs" style="left:61.5px;top:115.30px" width="14" height="14" viewBox="0 0 14 14"><path d="M2.6 11.4 L12 2" stroke="#d07a20" stroke-width="3.4"/><path d="M2.6 11.4 L12 2" stroke="#f7a63c" stroke-width="2.2"/><path d="M0.9 13.1 L2.9 11.1" stroke="#f3dcb6" stroke-width="2.6"/><circle cx="1.1" cy="12.9" r="0.65" fill="#222"/></svg>
<svg class="abs" style="left:89.5px;top:114.40px" width="15" height="15" viewBox="0 0 15 15"><defs><linearGradient id="pg5" x1="0" y1="0" x2="0" y2="1"><stop offset="0" stop-color="#ffffff"/><stop offset="0.55" stop-color="#d4d4d4"/><stop offset="1" stop-color="#7a7a7a"/></linearGradient></defs><rect x="2.9" y="0.4" width="8.8" height="4.2" fill="#f4f4f4" stroke="#b4b4b4" stroke-width="0.7"/><path d="M0.4 5.6 Q0.4 4.2 1.8 4.2 L12.8 4.2 Q14.2 4.2 14.2 5.6 L14.2 11.2 Q14.2 12.2 13.2 12.2 L1.4 12.2 Q0.4 12.2 0.4 11.2 Z" fill="url(#pg5)" stroke="#8a8a8a" stroke-width="0.6"/><rect x="4" y="9.8" width="7.2" height="4.6" fill="#e6e6e6" stroke="#9a9a9a" stroke-width="0.7"/><circle cx="12.6" cy="6.6" r="0.95" fill="#3fbf3f"/><circle cx="12.6" cy="8.8" r="0.95" fill="#e8b020"/></svg>
<div class="t" style="top:116.24px;font-size:12px;color:#222;left:115.90px;letter-spacing:0.350px;">14/12/23</div>
<div class="t" style="top:116.24px;font-size:12px;color:#222;right:1064.60px;">10000074</div>
<div class="t" style="top:116.24px;font-size:12px;color:#222;right:1019.80px;">1</div>
<div class="t" style="top:116.24px;font-size:12px;color:#555;left:330.80px;text-decoration:underline;max-width:226px;overflow:hidden;">Aco Engenharia - Aco Engenharia</div>
<div class="t" style="top:116.24px;font-size:12px;color:#222;left:570.60px;letter-spacing:0.260px;">15.302.930/0001-77</div>
<div class="t" style="top:116.24px;font-size:12px;color:#222;left:700.60px;">6101 - Venda de produ...</div>
<div class="t" style="top:116.24px;font-size:12px;color:#222;right:383.10px;letter-spacing:0.150px;">244,80</div>
<div class="t" style="top:116.24px;font-size:12px;color:#222;left:966.90px;">Emitida</div>
<div class="abs" style="left:18.2px;top:136.3px;width:12.8px;height:12.7px;background:#fff;border:1px solid #666;border-radius:2.5px"></div>
<svg class="abs" style="left:48.2px;top:140.10px" width="7" height="7" viewBox="0 0 7 7"><path d="M1.3 1.3 L5.8 5.8 M5.8 1.3 L1.3 5.8" stroke="#c4161c" stroke-width="1.9" stroke-linecap="butt"/></svg>
<svg class="abs" style="left:61.5px;top:136.00px" width="14" height="14" viewBox="0 0 14 14"><path d="M2.6 11.4 L12 2" stroke="#d07a20" stroke-width="3.4"/><path d="M2.6 11.4 L12 2" stroke="#f7a63c" stroke-width="2.2"/><path d="M0.9 13.1 L2.9 11.1" stroke="#f3dcb6" stroke-width="2.6"/><circle cx="1.1" cy="12.9" r="0.65" fill="#222"/></svg>
<svg class="abs" style="left:89.5px;top:135.10px" width="15" height="15" viewBox="0 0 15 15"><defs><linearGradient id="pg6" x1="0" y1="0" x2="0" y2="1"><stop offset="0" stop-color="#ffffff"/><stop offset="0.55" stop-color="#d4d4d4"/><stop offset="1" stop-color="#7a7a7a"/></linearGradient></defs><rect x="2.9" y="0.4" width="8.8" height="4.2" fill="#f4f4f4" stroke="#b4b4b4" stroke-width="0.7"/><path d="M0.4 5.6 Q0.4 4.2 1.8 4.2 L12.8 4.2 Q14.2 4.2 14.2 5.6 L14.2 11.2 Q14.2 12.2 13.2 12.2 L1.4 12.2 Q0.4 12.2 0.4 11.2 Z" fill="url(#pg6)" stroke="#8a8a8a" stroke-width="0.6"/><rect x="4" y="9.8" width="7.2" height="4.6" fill="#e6e6e6" stroke="#9a9a9a" stroke-width="0.7"/><circle cx="12.6" cy="6.6" r="0.95" fill="#3fbf3f"/><circle cx="12.6" cy="8.8" r="0.95" fill="#e8b020"/></svg>
<div class="t" style="top:136.94px;font-size:12px;color:#222;left:115.90px;letter-spacing:0.350px;">13/12/23</div>
<div class="t" style="top:136.94px;font-size:12px;color:#222;right:1064.60px;">0</div>
<div class="t" style="top:136.94px;font-size:12px;color:#222;right:1019.80px;">1</div>
<div class="t" style="top:136.94px;font-size:12px;color:#555;left:330.80px;text-decoration:underline;max-width:226px;overflow:hidden;">Grupo SG Industrial - SG Indústrias LTDA</div>
<div class="t" style="top:136.94px;font-size:12px;color:#222;left:570.60px;letter-spacing:0.260px;">29.745.463/0001-64</div>
<div class="t" style="top:136.94px;font-size:12px;color:#222;left:700.60px;">5101 - Venda de produ...</div>
<div class="t" style="top:136.94px;font-size:12px;color:#222;right:383.10px;letter-spacing:0.150px;">27.212,80</div>
<div class="t" style="top:136.94px;font-size:12px;color:#222;left:966.90px;">Digitação</div>
<svg class="abs" style="left:1020.5px;top:136.20px" width="15" height="15" viewBox="0 0 15 15"><path d="M8.2 1.3 L2.3 1.3 Q1.3 1.3 1.3 2.3 L1.3 12.9 Q1.3 13.9 2.3 13.9 L12.9 13.9 Q13.9 13.9 13.9 12.9 L13.9 7.2" fill="none" stroke="#ff8000" stroke-width="2.3"/><path d="M5.4 9.7 L10.9 4.2" stroke="#ff8000" stroke-width="3.4"/><path d="M3.4 11.8 L4.1 8.6 L6.6 11.1 Z" fill="#ff8000"/><path d="M12.2 2.9 L13 2.1" stroke="#ff8000" stroke-width="3.2" stroke-linecap="round"/></svg>
<div class="abs" style="left:18.2px;top:158.6px;width:12.8px;height:12.7px;background:#fff;border:1px solid #666;border-radius:2.5px"></div>
<svg class="abs" style="left:48.2px;top:162.40px" width="7" height="7" viewBox="0 0 7 7"><path d="M1.3 1.3 L5.8 5.8 M5.8 1.3 L1.3 5.8" stroke="#c4161c" stroke-width="1.9" stroke-linecap="butt"/></svg>
<svg class="abs" style="left:61.5px;top:158.30px" width="14" height="14" viewBox="0 0 14 14"><path d="M2.6 11.4 L12 2" stroke="#d07a20" stroke-width="3.4"/><path d="M2.6 11.4 L12 2" stroke="#f7a63c" stroke-width="2.2"/><path d="M0.9 13.1 L2.9 11.1" stroke="#f3dcb6" stroke-width="2.6"/><circle cx="1.1" cy="12.9" r="0.65" fill="#222"/></svg>
<svg class="abs" style="left:89.5px;top:157.40px" width="15" height="15" viewBox="0 0 15 15"><defs><linearGradient id="pg7" x1="0" y1="0" x2="0" y2="1"><stop offset="0" stop-color="#ffffff"/><stop offset="0.55" stop-color="#d4d4d4"/><stop offset="1" stop-color="#7a7a7a"/></linearGradient></defs><rect x="2.9" y="0.4" width="8.8" height="4.2" fill="#f4f4f4" stroke="#b4b4b4" stroke-width="0.7"/><path d="M0.4 5.6 Q0.4 4.2 1.8 4.2 L12.8 4.2 Q14.2 4.2 14.2 5.6 L14.2 11.2 Q14.2 12.2 13.2 12.2 L1.4 12.2 Q0.4 12.2 0.4 11.2 Z" fill="url(#pg7)" stroke="#8a8a8a" stroke-width="0.6"/><rect x="4" y="9.8" width="7.2" height="4.6" fill="#e6e6e6" stroke="#9a9a9a" stroke-width="0.7"/><circle cx="12.6" cy="6.6" r="0.95" fill="#3fbf3f"/><circle cx="12.6" cy="8.8" r="0.95" fill="#e8b020"/></svg>
<div class="t" style="top:159.24px;font-size:12px;color:#222;left:115.90px;letter-spacing:0.350px;">05/12/23</div>
<div class="t" style="top:159.24px;font-size:12px;color:#222;right:1064.60px;">1</div>
<div class="t" style="top:159.24px;font-size:12px;color:#222;right:1019.80px;">3</div>
<div class="t" style="top:159.24px;font-size:12px;color:#555;left:330.80px;text-decoration:underline;max-width:226px;overflow:hidden;">Grupo SG Industrial - SG Indústrias LTDA</div>
<div class="t" style="top:159.24px;font-size:12px;color:#222;left:570.60px;letter-spacing:0.260px;">29.745.463/0001-64</div>
<div class="t" style="top:159.24px;font-size:12px;color:#222;left:700.60px;">5999-1 - Prestação de ...</div>
<div class="t" style="top:159.24px;font-size:12px;color:#222;right:383.10px;letter-spacing:0.150px;">9.600,00</div>
<div class="t" style="top:159.24px;font-size:12px;color:#222;left:966.90px;">Emitida</div>
<div class="abs" style="left:18.2px;top:180.4px;width:12.8px;height:12.7px;background:#fff;border:1px solid #666;border-radius:2.5px"></div>
<svg class="abs" style="left:48.2px;top:184.20px" width="7" height="7" viewBox="0 0 7 7"><path d="M1.3 1.3 L5.8 5.8 M5.8 1.3 L1.3 5.8" stroke="#c4161c" stroke-width="1.9" stroke-linecap="butt"/></svg>
<svg class="abs" style="left:61.5px;top:180.10px" width="14" height="14" viewBox="0 0 14 14"><path d="M2.6 11.4 L12 2" stroke="#d07a20" stroke-width="3.4"/><path d="M2.6 11.4 L12 2" stroke="#f7a63c" stroke-width="2.2"/><path d="M0.9 13.1 L2.9 11.1" stroke="#f3dcb6" stroke-width="2.6"/><circle cx="1.1" cy="12.9" r="0.65" fill="#222"/></svg>
<svg class="abs" style="left:89.5px;top:179.20px" width="15" height="15" viewBox="0 0 15 15"><defs><linearGradient id="pg8" x1="0" y1="0" x2="0" y2="1"><stop offset="0" stop-color="#ffffff"/><stop offset="0.55" stop-color="#d4d4d4"/><stop offset="1" stop-color="#7a7a7a"/></linearGradient></defs><rect x="2.9" y="0.4" width="8.8" height="4.2" fill="#f4f4f4" stroke="#b4b4b4" stroke-width="0.7"/><path d="M0.4 5.6 Q0.4 4.2 1.8 4.2 L12.8 4.2 Q14.2 4.2 14.2 5.6 L14.2 11.2 Q14.2 12.2 13.2 12.2 L1.4 12.2 Q0.4 12.2 0.4 11.2 Z" fill="url(#pg8)" stroke="#8a8a8a" stroke-width="0.6"/><rect x="4" y="9.8" width="7.2" height="4.6" fill="#e6e6e6" stroke="#9a9a9a" stroke-width="0.7"/><circle cx="12.6" cy="6.6" r="0.95" fill="#3fbf3f"/><circle cx="12.6" cy="8.8" r="0.95" fill="#e8b020"/></svg>
<div class="t" style="top:181.04px;font-size:12px;color:#222;left:115.90px;letter-spacing:0.350px;">29/11/23</div>
<div class="t" style="top:181.04px;font-size:12px;color:#222;right:1064.60px;">0</div>
<div class="t" style="top:181.04px;font-size:12px;color:#222;right:1019.80px;">1</div>
<div class="t" style="top:181.04px;font-size:12px;color:#555;left:330.80px;text-decoration:underline;max-width:226px;overflow:hidden;">Aco Engenharia - Aco Engenharia</div>
<div class="t" style="top:181.04px;font-size:12px;color:#222;left:570.60px;letter-spacing:0.260px;">15.302.930/0001-77</div>
<div class="t" style="top:181.04px;font-size:12px;color:#222;left:700.60px;">6902 - Retorno de mer...</div>
<div class="t" style="top:181.04px;font-size:12px;color:#222;right:383.10px;letter-spacing:0.150px;">1.820,60</div>
<div class="t" style="top:181.04px;font-size:12px;color:#222;left:966.90px;">Digitação</div>
<svg class="abs" style="left:1020.5px;top:180.30px" width="15" height="15" viewBox="0 0 15 15"><path d="M8.2 1.3 L2.3 1.3 Q1.3 1.3 1.3 2.3 L1.3 12.9 Q1.3 13.9 2.3 13.9 L12.9 13.9 Q13.9 13.9 13.9 12.9 L13.9 7.2" fill="none" stroke="#ff8000" stroke-width="2.3"/><path d="M5.4 9.7 L10.9 4.2" stroke="#ff8000" stroke-width="3.4"/><path d="M3.4 11.8 L4.1 8.6 L6.6 11.1 Z" fill="#ff8000"/><path d="M12.2 2.9 L13 2.1" stroke="#ff8000" stroke-width="3.2" stroke-linecap="round"/></svg>
<div class="abs" style="left:18.2px;top:202.9px;width:12.8px;height:12.7px;background:#fff;border:1px solid #666;border-radius:2.5px"></div>
<svg class="abs" style="left:48.2px;top:206.70px" width="7" height="7" viewBox="0 0 7 7"><path d="M1.3 1.3 L5.8 5.8 M5.8 1.3 L1.3 5.8" stroke="#c4161c" stroke-width="1.9" stroke-linecap="butt"/></svg>
<svg class="abs" style="left:61.5px;top:202.60px" width="14" height="14" viewBox="0 0 14 14"><path d="M2.6 11.4 L12 2" stroke="#d07a20" stroke-width="3.4"/><path d="M2.6 11.4 L12 2" stroke="#f7a63c" stroke-width="2.2"/><path d="M0.9 13.1 L2.9 11.1" stroke="#f3dcb6" stroke-width="2.6"/><circle cx="1.1" cy="12.9" r="0.65" fill="#222"/></svg>
<svg class="abs" style="left:89.5px;top:201.70px" width="15" height="15" viewBox="0 0 15 15"><defs><linearGradient id="pg9" x1="0" y1="0" x2="0" y2="1"><stop offset="0" stop-color="#ffffff"/><stop offset="0.55" stop-color="#d4d4d4"/><stop offset="1" stop-color="#7a7a7a"/></linearGradient></defs><rect x="2.9" y="0.4" width="8.8" height="4.2" fill="#f4f4f4" stroke="#b4b4b4" stroke-width="0.7"/><path d="M0.4 5.6 Q0.4 4.2 1.8 4.2 L12.8 4.2 Q14.2 4.2 14.2 5.6 L14.2 11.2 Q14.2 12.2 13.2 12.2 L1.4 12.2 Q0.4 12.2 0.4 11.2 Z" fill="url(#pg9)" stroke="#8a8a8a" stroke-width="0.6"/><rect x="4" y="9.8" width="7.2" height="4.6" fill="#e6e6e6" stroke="#9a9a9a" stroke-width="0.7"/><circle cx="12.6" cy="6.6" r="0.95" fill="#3fbf3f"/><circle cx="12.6" cy="8.8" r="0.95" fill="#e8b020"/></svg>
<div class="t" style="top:203.54px;font-size:12px;color:#222;left:115.90px;letter-spacing:0.350px;">29/11/23</div>
<div class="t" style="top:203.54px;font-size:12px;color:#222;right:1064.60px;">10000073</div>
<div class="t" style="top:203.54px;font-size:12px;color:#222;right:1019.80px;">1</div>
<div class="t" style="top:203.54px;font-size:12px;color:#555;left:330.80px;text-decoration:underline;max-width:226px;overflow:hidden;">Grupo SG Industrial - SG Indústrias LTDA</div>
<div class="t" style="top:203.54px;font-size:12px;color:#222;left:570.60px;letter-spacing:0.260px;">29.745.463/0001-64</div>
<div class="t" style="top:203.54px;font-size:12px;color:#222;left:700.60px;">5923 - Remessa por co...</div>
<div class="t" style="top:203.54px;font-size:12px;color:#222;right:383.10px;letter-spacing:0.150px;">276,00</div>
<div class="t" style="top:203.54px;font-size:12px;color:#222;left:966.90px;">Emitida</div>
<div class="abs" style="left:18.2px;top:224.1px;width:12.8px;height:12.7px;background:#fff;border:1px solid #666;border-radius:2.5px"></div>
<svg class="abs" style="left:48.2px;top:227.90px" width="7" height="7" viewBox="0 0 7 7"><path d="M1.3 1.3 L5.8 5.8 M5.8 1.3 L1.3 5.8" stroke="#c4161c" stroke-width="1.9" stroke-linecap="butt"/></svg>
<svg class="abs" style="left:61.5px;top:223.80px" width="14" height="14" viewBox="0 0 14 14"><path d="M2.6 11.4 L12 2" stroke="#d07a20" stroke-width="3.4"/><path d="M2.6 11.4 L12 2" stroke="#f7a63c" stroke-width="2.2"/><path d="M0.9 13.1 L2.9 11.1" stroke="#f3dcb6" stroke-width="2.6"/><circle cx="1.1" cy="12.9" r="0.65" fill="#222"/></svg>
<svg class="abs" style="left:89.5px;top:222.90px" width="15" height="15" viewBox="0 0 15 15"><defs><linearGradient id="pg10" x1="0" y1="0" x2="0" y2="1"><stop offset="0" stop-color="#ffffff"/><stop offset="0.55" stop-color="#d4d4d4"/><stop offset="1" stop-color="#7a7a7a"/></linearGradient></defs><rect x="2.9" y="0.4" width="8.8" height="4.2" fill="#f4f4f4" stroke="#b4b4b4" stroke-width="0.7"/><path d="M0.4 5.6 Q0.4 4.2 1.8 4.2 L12.8 4.2 Q14.2 4.2 14.2 5.6 L14.2 11.2 Q14.2 12.2 13.2 12.2 L1.4 12.2 Q0.4 12.2 0.4 11.2 Z" fill="url(#pg10)" stroke="#8a8a8a" stroke-width="0.6"/><rect x="4" y="9.8" width="7.2" height="4.6" fill="#e6e6e6" stroke="#9a9a9a" stroke-width="0.7"/><circle cx="12.6" cy="6.6" r="0.95" fill="#3fbf3f"/><circle cx="12.6" cy="8.8" r="0.95" fill="#e8b020"/></svg>
<div class="t" style="top:224.74px;font-size:12px;color:#222;left:115.90px;letter-spacing:0.350px;">23/11/23</div>
<div class="t" style="top:224.74px;font-size:12px;color:#222;right:1064.60px;">10000071</div>
<div class="t" style="top:224.74px;font-size:12px;color:#222;right:1019.80px;">1</div>
<div class="t" style="top:224.74px;font-size:12px;color:#555;left:330.80px;text-decoration:underline;max-width:226px;overflow:hidden;">Supermercado espigão - Moreira e Silva...</div>
<div class="t" style="top:224.74px;font-size:12px;color:#222;left:570.60px;letter-spacing:0.260px;">04.869.306/0001-30</div>
<div class="t" style="top:224.74px;font-size:12px;color:#222;left:700.60px;">5124 - Industrialização...</div>
<div class="t" style="top:224.74px;font-size:12px;color:#222;right:383.10px;letter-spacing:0.150px;">30,00</div>
<div class="t" style="top:224.74px;font-size:12px;color:#222;left:966.90px;">Emitida</div>
<div class="abs" style="left:18.2px;top:245.9px;width:12.8px;height:12.7px;background:#fff;border:1px solid #666;border-radius:2.5px"></div>
<svg class="abs" style="left:48.2px;top:249.70px" width="7" height="7" viewBox="0 0 7 7"><path d="M1.3 1.3 L5.8 5.8 M5.8 1.3 L1.3 5.8" stroke="#c4161c" stroke-width="1.9" stroke-linecap="butt"/></svg>
<svg class="abs" style="left:61.5px;top:245.60px" width="14" height="14" viewBox="0 0 14 14"><path d="M2.6 11.4 L12 2" stroke="#d07a20" stroke-width="3.4"/><path d="M2.6 11.4 L12 2" stroke="#f7a63c" stroke-width="2.2"/><path d="M0.9 13.1 L2.9 11.1" stroke="#f3dcb6" stroke-width="2.6"/><circle cx="1.1" cy="12.9" r="0.65" fill="#222"/></svg>
<svg class="abs" style="left:89.5px;top:244.70px" width="15" height="15" viewBox="0 0 15 15"><defs><linearGradient id="pg11" x1="0" y1="0" x2="0" y2="1"><stop offset="0" stop-color="#ffffff"/><stop offset="0.55" stop-color="#d4d4d4"/><stop offset="1" stop-color="#7a7a7a"/></linearGradient></defs><rect x="2.9" y="0.4" width="8.8" height="4.2" fill="#f4f4f4" stroke="#b4b4b4" stroke-width="0.7"/><path d="M0.4 5.6 Q0.4 4.2 1.8 4.2 L12.8 4.2 Q14.2 4.2 14.2 5.6 L14.2 11.2 Q14.2 12.2 13.2 12.2 L1.4 12.2 Q0.4 12.2 0.4 11.2 Z" fill="url(#pg11)" stroke="#8a8a8a" stroke-width="0.6"/><rect x="4" y="9.8" width="7.2" height="4.6" fill="#e6e6e6" stroke="#9a9a9a" stroke-width="0.7"/><circle cx="12.6" cy="6.6" r="0.95" fill="#3fbf3f"/><circle cx="12.6" cy="8.8" r="0.95" fill="#e8b020"/></svg>
<div class="t" style="top:246.54px;font-size:12px;color:#222;left:115.90px;letter-spacing:0.350px;">23/11/23</div>
<div class="t" style="top:246.54px;font-size:12px;color:#222;right:1064.60px;">10000070</div>
<div class="t" style="top:246.54px;font-size:12px;color:#222;right:1019.80px;">1</div>
<div class="t" style="top:246.54px;font-size:12px;color:#555;left:330.80px;text-decoration:underline;max-width:226px;overflow:hidden;">Supermercado espigão - Moreira e Silva...</div>
<div class="t" style="top:246.54px;font-size:12px;color:#222;left:570.60px;letter-spacing:0.260px;">04.869.306/0001-30</div>
<div class="t" style="top:246.54px;font-size:12px;color:#222;left:700.60px;">5124 - Industrialização...</div>
<div class="t" style="top:246.54px;font-size:12px;color:#222;right:383.10px;letter-spacing:0.150px;">15,00</div>
<div class="t" style="top:246.54px;font-size:12px;color:#222;left:966.90px;">Emitida</div>
<div class="t" style="top:246.54px;font-size:12px;color:#222;left:1195.90px;">Em processa...</div>
<div class="abs" style="left:18.2px;top:266.2px;width:12.8px;height:12.7px;background:#fff;border:1px solid #666;border-radius:2.5px"></div>
<svg class="abs" style="left:48.2px;top:270.00px" width="7" height="7" viewBox="0 0 7 7"><path d="M1.3 1.3 L5.8 5.8 M5.8 1.3 L1.3 5.8" stroke="#c4161c" stroke-width="1.9" stroke-linecap="butt"/></svg>
<svg class="abs" style="left:61.5px;top:265.90px" width="14" height="14" viewBox="0 0 14 14"><path d="M2.6 11.4 L12 2" stroke="#d07a20" stroke-width="3.4"/><path d="M2.6 11.4 L12 2" stroke="#f7a63c" stroke-width="2.2"/><path d="M0.9 13.1 L2.9 11.1" stroke="#f3dcb6" stroke-width="2.6"/><circle cx="1.1" cy="12.9" r="0.65" fill="#222"/></svg>
<svg class="abs" style="left:89.5px;top:265.00px" width="15" height="15" viewBox="0 0 15 15"><defs><linearGradient id="pg12" x1="0" y1="0" x2="0" y2="1"><stop offset="0" stop-color="#ffffff"/><stop offset="0.55" stop-color="#d4d4d4"/><stop offset="1" stop-color="#7a7a7a"/></linearGradient></defs><rect x="2.9" y="0.4" width="8.8" height="4.2" fill="#f4f4f4" stroke="#b4b4b4" stroke-width="0.7"/><path d="M0.4 5.6 Q0.4 4.2 1.8 4.2 L12.8 4.2 Q14.2 4.2 14.2 5.6 L14.2 11.2 Q14.2 12.2 13.2 12.2 L1.4 12.2 Q0.4 12.2 0.4 11.2 Z" fill="url(#pg12)" stroke="#8a8a8a" stroke-width="0.6"/><rect x="4" y="9.8" width="7.2" height="4.6" fill="#e6e6e6" stroke="#9a9a9a" stroke-width="0.7"/><circle cx="12.6" cy="6.6" r="0.95" fill="#3fbf3f"/><circle cx="12.6" cy="8.8" r="0.95" fill="#e8b020"/></svg>
<div class="t" style="top:266.84px;font-size:12px;color:#222;left:115.90px;letter-spacing:0.350px;">23/11/23</div>
<div class="t" style="top:266.84px;font-size:12px;color:#222;right:1064.60px;">10000064</div>
<div class="t" style="top:266.84px;font-size:12px;color:#222;right:1019.80px;">1</div>
<div class="t" style="top:266.84px;font-size:12px;color:#555;left:330.80px;text-decoration:underline;max-width:226px;overflow:hidden;">Fábrica de móveis - Matriz (LP) - Fábric...</div>
<div class="t" style="top:266.84px;font-size:12px;color:#222;left:570.60px;letter-spacing:0.260px;">28.302.802/0001-75</div>
<div class="t" style="top:266.84px;font-size:12px;color:#222;left:700.60px;">5101 - Venda de produ...</div>
<div class="t" style="top:266.84px;font-size:12px;color:#222;right:383.10px;letter-spacing:0.150px;">5.881,48</div>
<div class="t" style="top:266.84px;font-size:12px;color:#222;left:966.90px;">Digitação</div>
<svg class="abs" style="left:1020.5px;top:266.10px" width="15" height="15" viewBox="0 0 15 15"><path d="M8.2 1.3 L2.3 1.3 Q1.3 1.3 1.3 2.3 L1.3 12.9 Q1.3 13.9 2.3 13.9 L12.9 13.9 Q13.9 13.9 13.9 12.9 L13.9 7.2" fill="none" stroke="#ff8000" stroke-width="2.3"/><path d="M5.4 9.7 L10.9 4.2" stroke="#ff8000" stroke-width="3.4"/><path d="M3.4 11.8 L4.1 8.6 L6.6 11.1 Z" fill="#ff8000"/><path d="M12.2 2.9 L13 2.1" stroke="#ff8000" stroke-width="3.2" stroke-linecap="round"/></svg>
<div class="t" style="top:266.84px;font-size:12px;color:#222;left:1195.90px;">Rejeitada</div>
<svg class="abs" style="left:1249px;top:265.90px" width="14" height="14" viewBox="0 0 14 14"><circle cx="7" cy="7" r="5.8" fill="none" stroke="#e0202a" stroke-width="1.9"/><line x1="3" y1="3" x2="11" y2="11" stroke="#e0202a" stroke-width="1.9"/></svg>
<div class="abs" style="left:18.2px;top:288.4px;width:12.8px;height:12.7px;background:#fff;border:1px solid #666;border-radius:2.5px"></div>
<svg class="abs" style="left:48.2px;top:292.20px" width="7" height="7" viewBox="0 0 7 7"><path d="M1.3 1.3 L5.8 5.8 M5.8 1.3 L1.3 5.8" stroke="#c4161c" stroke-width="1.9" stroke-linecap="butt"/></svg>
<svg class="abs" style="left:61.5px;top:288.10px" width="14" height="14" viewBox="0 0 14 14"><path d="M2.6 11.4 L12 2" stroke="#d07a20" stroke-width="3.4"/><path d="M2.6 11.4 L12 2" stroke="#f7a63c" stroke-width="2.2"/><path d="M0.9 13.1 L2.9 11.1" stroke="#f3dcb6" stroke-width="2.6"/><circle cx="1.1" cy="12.9" r="0.65" fill="#222"/></svg>
<svg class="abs" style="left:89.5px;top:287.20px" width="15" height="15" viewBox="0 0 15 15"><defs><linearGradient id="pg13" x1="0" y1="0" x2="0" y2="1"><stop offset="0" stop-color="#ffffff"/><stop offset="0.55" stop-color="#d4d4d4"/><stop offset="1" stop-color="#7a7a7a"/></linearGradient></defs><rect x="2.9" y="0.4" width="8.8" height="4.2" fill="#f4f4f4" stroke="#b4b4b4" stroke-width="0.7"/><path d="M0.4 5.6 Q0.4 4.2 1.8 4.2 L12.8 4.2 Q14.2 4.2 14.2 5.6 L14.2 11.2 Q14.2 12.2 13.2 12.2 L1.4 12.2 Q0.4 12.2 0.4 11.2 Z" fill="url(#pg13)" stroke="#8a8a8a" stroke-width="0.6"/><rect x="4" y="9.8" width="7.2" height="4.6" fill="#e6e6e6" stroke="#9a9a9a" stroke-width="0.7"/><circle cx="12.6" cy="6.6" r="0.95" fill="#3fbf3f"/><circle cx="12.6" cy="8.8" r="0.95" fill="#e8b020"/></svg>
<div class="t" style="top:289.04px;font-size:12px;color:#222;left:115.90px;letter-spacing:0.350px;">21/11/23</div>
<div class="t" style="top:289.04px;font-size:12px;color:#222;right:1064.60px;">10000069</div>
<div class="t" style="top:289.04px;font-size:12px;color:#222;right:1019.80px;">1</div>
<div class="t" style="top:289.04px;font-size:12px;color:#555;left:330.80px;text-decoration:underline;max-width:226px;overflow:hidden;">Madelar Indústria - MADELAR COMERCI...</div>
<div class="t" style="top:289.04px;font-size:12px;color:#222;left:570.60px;letter-spacing:0.260px;">01.835.967/0001-56</div>
<div class="t" style="top:289.04px;font-size:12px;color:#222;left:700.60px;">2102 - Compra para co...</div>
<div class="t" style="top:289.04px;font-size:12px;color:#222;right:383.10px;letter-spacing:0.150px;">7.304,20</div>
<div class="t" style="top:289.04px;font-size:12px;color:#222;left:966.90px;">Emitida</div>
<div class="abs" style="left:18.2px;top:310.6px;width:12.8px;height:12.7px;background:#fff;border:1px solid #666;border-radius:2.5px"></div>
<svg class="abs" style="left:48.2px;top:314.40px" width="7" height="7" viewBox="0 0 7 7"><path d="M1.3 1.3 L5.8 5.8 M5.8 1.3 L1.3 5.8" stroke="#c4161c" stroke-width="1.9" stroke-linecap="butt"/></svg>
<svg class="abs" style="left:61.5px;top:310.30px" width="14" height="14" viewBox="0 0 14 14"><path d="M2.6 11.4 L12 2" stroke="#d07a20" stroke-width="3.4"/><path d="M2.6 11.4 L12 2" stroke="#f7a63c" stroke-width="2.2"/><path d="M0.9 13.1 L2.9 11.1" stroke="#f3dcb6" stroke-width="2.6"/><circle cx="1.1" cy="12.9" r="0.65" fill="#222"/></svg>
<svg class="abs" style="left:89.5px;top:309.40px" width="15" height="15" viewBox="0 0 15 15"><defs><linearGradient id="pg14" x1="0" y1="0" x2="0" y2="1"><stop offset="0" stop-color="#ffffff"/><stop offset="0.55" stop-color="#d4d4d4"/><stop offset="1" stop-color="#7a7a7a"/></linearGradient></defs><rect x="2.9" y="0.4" width="8.8" height="4.2" fill="#f4f4f4" stroke="#b4b4b4" stroke-width="0.7"/><path d="M0.4 5.6 Q0.4 4.2 1.8 4.2 L12.8 4.2 Q14.2 4.2 14.2 5.6 L14.2 11.2 Q14.2 12.2 13.2 12.2 L1.4 12.2 Q0.4 12.2 0.4 11.2 Z" fill="url(#pg14)" stroke="#8a8a8a" stroke-width="0.6"/><rect x="4" y="9.8" width="7.2" height="4.6" fill="#e6e6e6" stroke="#9a9a9a" stroke-width="0.7"/><circle cx="12.6" cy="6.6" r="0.95" fill="#3fbf3f"/><circle cx="12.6" cy="8.8" r="0.95" fill="#e8b020"/></svg>
<div class="t" style="top:311.24px;font-size:12px;color:#222;left:115.90px;letter-spacing:0.350px;">21/11/23</div>
<div class="t" style="top:311.24px;font-size:12px;color:#222;right:1064.60px;">10000068</div>
<div class="t" style="top:311.24px;font-size:12px;color:#222;right:1019.80px;">1</div>
<div class="t" style="top:311.24px;font-size:12px;color:#555;left:330.80px;text-decoration:underline;max-width:226px;overflow:hidden;">Cargotec - Cargotec</div>
<div class="t" style="top:311.24px;font-size:12px;color:#222;left:570.60px;letter-spacing:0.260px;">358204552370</div>
<div class="t" style="top:311.24px;font-size:12px;color:#222;left:700.60px;">7101 - Venda de produ...</div>
<div class="t" style="top:311.24px;font-size:12px;color:#222;right:383.10px;letter-spacing:0.150px;">700,00</div>
<div class="t" style="top:311.24px;font-size:12px;color:#222;left:966.90px;">Emitida</div>
<div class="abs" style="left:18.2px;top:331.7px;width:12.8px;height:12.7px;background:#fff;border:1px solid #666;border-radius:2.5px"></div>
<svg class="abs" style="left:48.2px;top:335.50px" width="7" height="7" viewBox="0 0 7 7"><path d="M1.3 1.3 L5.8 5.8 M5.8 1.3 L1.3 5.8" stroke="#c4161c" stroke-width="1.9" stroke-linecap="butt"/></svg>
<svg class="abs" style="left:61.5px;top:331.40px" width="14" height="14" viewBox="0 0 14 14"><path d="M2.6 11.4 L12 2" stroke="#d07a20" stroke-width="3.4"/><path d="M2.6 11.4 L12 2" stroke="#f7a63c" stroke-width="2.2"/><path d="M0.9 13.1 L2.9 11.1" stroke="#f3dcb6" stroke-width="2.6"/><circle cx="1.1" cy="12.9" r="0.65" fill="#222"/></svg>
<svg class="abs" style="left:89.5px;top:330.50px" width="15" height="15" viewBox="0 0 15 15"><defs><linearGradient id="pg15" x1="0" y1="0" x2="0" y2="1"><stop offset="0" stop-color="#ffffff"/><stop offset="0.55" stop-color="#d4d4d4"/><stop offset="1" stop-color="#7a7a7a"/></linearGradient></defs><rect x="2.9" y="0.4" width="8.8" height="4.2" fill="#f4f4f4" stroke="#b4b4b4" stroke-width="0.7"/><path d="M0.4 5.6 Q0.4 4.2 1.8 4.2 L12.8 4.2 Q14.2 4.2 14.2 5.6 L14.2 11.2 Q14.2 12.2 13.2 12.2 L1.4 12.2 Q0.4 12.2 0.4 11.2 Z" fill="url(#pg15)" stroke="#8a8a8a" stroke-width="0.6"/><rect x="4" y="9.8" width="7.2" height="4.6" fill="#e6e6e6" stroke="#9a9a9a" stroke-width="0.7"/><circle cx="12.6" cy="6.6" r="0.95" fill="#3fbf3f"/><circle cx="12.6" cy="8.8" r="0.95" fill="#e8b020"/></svg>
<div class="t" style="top:332.34px;font-size:12px;color:#222;left:115.90px;letter-spacing:0.350px;">21/11/23</div>
<div class="t" style="top:332.34px;font-size:12px;color:#222;right:1064.60px;">10000067</div>
<div class="t" style="top:332.34px;font-size:12px;color:#222;right:1019.80px;">1</div>
<div class="t" style="top:332.34px;font-size:12px;color:#555;left:330.80px;text-decoration:underline;max-width:226px;overflow:hidden;">Costa & Silva empreendimentos - Costa ...</div>
<div class="t" style="top:332.34px;font-size:12px;color:#222;left:570.60px;letter-spacing:0.260px;">01.569.539/0001-29</div>
<div class="t" style="top:332.34px;font-size:12px;color:#222;left:700.60px;">5601 - Transferência de...</div>
<div class="t" style="top:332.34px;font-size:12px;color:#222;right:383.10px;letter-spacing:0.150px;">1.800,00</div>
<div class="t" style="top:332.34px;font-size:12px;color:#222;left:966.90px;">Digitação</div>
<svg class="abs" style="left:1020.5px;top:331.60px" width="15" height="15" viewBox="0 0 15 15"><path d="M8.2 1.3 L2.3 1.3 Q1.3 1.3 1.3 2.3 L1.3 12.9 Q1.3 13.9 2.3 13.9 L12.9 13.9 Q13.9 13.9 13.9 12.9 L13.9 7.2" fill="none" stroke="#ff8000" stroke-width="2.3"/><path d="M5.4 9.7 L10.9 4.2" stroke="#ff8000" stroke-width="3.4"/><path d="M3.4 11.8 L4.1 8.6 L6.6 11.1 Z" fill="#ff8000"/><path d="M12.2 2.9 L13 2.1" stroke="#ff8000" stroke-width="3.2" stroke-linecap="round"/></svg>
<div class="abs" style="left:18.2px;top:353.9px;width:12.8px;height:12.7px;background:#fff;border:1px solid #666;border-radius:2.5px"></div>
<svg class="abs" style="left:48.2px;top:357.70px" width="7" height="7" viewBox="0 0 7 7"><path d="M1.3 1.3 L5.8 5.8 M5.8 1.3 L1.3 5.8" stroke="#c4161c" stroke-width="1.9" stroke-linecap="butt"/></svg>
<svg class="abs" style="left:61.5px;top:353.60px" width="14" height="14" viewBox="0 0 14 14"><path d="M2.6 11.4 L12 2" stroke="#d07a20" stroke-width="3.4"/><path d="M2.6 11.4 L12 2" stroke="#f7a63c" stroke-width="2.2"/><path d="M0.9 13.1 L2.9 11.1" stroke="#f3dcb6" stroke-width="2.6"/><circle cx="1.1" cy="12.9" r="0.65" fill="#222"/></svg>
<svg class="abs" style="left:89.5px;top:352.70px" width="15" height="15" viewBox="0 0 15 15"><defs><linearGradient id="pg16" x1="0" y1="0" x2="0" y2="1"><stop offset="0" stop-color="#ffffff"/><stop offset="0.55" stop-color="#d4d4d4"/><stop offset="1" stop-color="#7a7a7a"/></linearGradient></defs><rect x="2.9" y="0.4" width="8.8" height="4.2" fill="#f4f4f4" stroke="#b4b4b4" stroke-width="0.7"/><path d="M0.4 5.6 Q0.4 4.2 1.8 4.2 L12.8 4.2 Q14.2 4.2 14.2 5.6 L14.2 11.2 Q14.2 12.2 13.2 12.2 L1.4 12.2 Q0.4 12.2 0.4 11.2 Z" fill="url(#pg16)" stroke="#8a8a8a" stroke-width="0.6"/><rect x="4" y="9.8" width="7.2" height="4.6" fill="#e6e6e6" stroke="#9a9a9a" stroke-width="0.7"/><circle cx="12.6" cy="6.6" r="0.95" fill="#3fbf3f"/><circle cx="12.6" cy="8.8" r="0.95" fill="#e8b020"/></svg>
<div class="t" style="top:354.54px;font-size:12px;color:#222;left:115.90px;letter-spacing:0.350px;">20/11/23</div>
<div class="t" style="top:354.54px;font-size:12px;color:#222;right:1064.60px;">0</div>
<div class="t" style="top:354.54px;font-size:12px;color:#222;right:1019.80px;">1</div>
<div class="t" style="top:354.54px;font-size:12px;color:#555;left:330.80px;text-decoration:underline;max-width:226px;overflow:hidden;">Cliente do Acre - Cliente do Acre</div>
<div class="t" style="top:354.54px;font-size:12px;color:#222;left:570.60px;letter-spacing:0.260px;">04.492.861/0001-95</div>
<div class="t" style="top:354.54px;font-size:12px;color:#222;left:700.60px;">6101 - Venda de produ...</div>
<div class="t" style="top:354.54px;font-size:12px;color:#222;right:383.10px;letter-spacing:0.150px;">9,00</div>
<div class="t" style="top:354.54px;font-size:12px;color:#222;left:966.90px;">Digitação</div>
<svg class="abs" style="left:1020.5px;top:353.80px" width="15" height="15" viewBox="0 0 15 15"><path d="M8.2 1.3 L2.3 1.3 Q1.3 1.3 1.3 2.3 L1.3 12.9 Q1.3 13.9 2.3 13.9 L12.9 13.9 Q13.9 13.9 13.9 12.9 L13.9 7.2" fill="none" stroke="#ff8000" stroke-width="2.3"/><path d="M5.4 9.7 L10.9 4.2" stroke="#ff8000" stroke-width="3.4"/><path d="M3.4 11.8 L4.1 8.6 L6.6 11.1 Z" fill="#ff8000"/><path d="M12.2 2.9 L13 2.1" stroke="#ff8000" stroke-width="3.2" stroke-linecap="round"/></svg>
<div class="abs" style="left:18.2px;top:376.9px;width:12.8px;height:12.7px;background:#fff;border:1px solid #666;border-radius:2.5px"></div>
<svg class="abs" style="left:48.2px;top:380.70px" width="7" height="7" viewBox="0 0 7 7"><path d="M1.3 1.3 L5.8 5.8 M5.8 1.3 L1.3 5.8" stroke="#c4161c" stroke-width="1.9" stroke-linecap="butt"/></svg>
<svg class="abs" style="left:61.5px;top:376.60px" width="14" height="14" viewBox="0 0 14 14"><path d="M2.6 11.4 L12 2" stroke="#d07a20" stroke-width="3.4"/><path d="M2.6 11.4 L12 2" stroke="#f7a63c" stroke-width="2.2"/><path d="M0.9 13.1 L2.9 11.1" stroke="#f3dcb6" stroke-width="2.6"/><circle cx="1.1" cy="12.9" r="0.65" fill="#222"/></svg>
<svg class="abs" style="left:89.5px;top:375.70px" width="15" height="15" viewBox="0 0 15 15"><defs><linearGradient id="pg17" x1="0" y1="0" x2="0" y2="1"><stop offset="0" stop-color="#ffffff"/><stop offset="0.55" stop-color="#d4d4d4"/><stop offset="1" stop-color="#7a7a7a"/></linearGradient></defs><rect x="2.9" y="0.4" width="8.8" height="4.2" fill="#f4f4f4" stroke="#b4b4b4" stroke-width="0.7"/><path d="M0.4 5.6 Q0.4 4.2 1.8 4.2 L12.8 4.2 Q14.2 4.2 14.2 5.6 L14.2 11.2 Q14.2 12.2 13.2 12.2 L1.4 12.2 Q0.4 12.2 0.4 11.2 Z" fill="url(#pg17)" stroke="#8a8a8a" stroke-width="0.6"/><rect x="4" y="9.8" width="7.2" height="4.6" fill="#e6e6e6" stroke="#9a9a9a" stroke-width="0.7"/><circle cx="12.6" cy="6.6" r="0.95" fill="#3fbf3f"/><circle cx="12.6" cy="8.8" r="0.95" fill="#e8b020"/></svg>
<div class="t" style="top:375.94px;font-size:12px;color:#222;left:115.90px;letter-spacing:0.350px;">20/11/23</div>
<div class="t" style="top:375.94px;font-size:12px;color:#222;right:1064.60px;">0</div>
<div class="t" style="top:375.94px;font-size:12px;color:#222;right:1019.80px;">1</div>
<div class="t" style="top:375.94px;font-size:12px;color:#555;left:330.80px;text-decoration:underline;max-width:226px;overflow:hidden;">Cliente do Acre - Cliente do Acre</div>
<div class="t" style="top:375.94px;font-size:12px;color:#222;left:570.60px;letter-spacing:0.260px;">04.492.861/0001-95</div>
<div class="t" style="top:375.94px;font-size:12px;color:#222;left:700.60px;">6101 - Venda de produ...</div>
<div class="t" style="top:375.94px;font-size:12px;color:#222;right:383.10px;letter-spacing:0.150px;">9,00</div>
<div class="t" style="top:375.94px;font-size:12px;color:#222;left:966.90px;">Digitação</div>
<svg class="abs" style="left:1020.5px;top:376.80px" width="15" height="15" viewBox="0 0 15 15"><path d="M8.2 1.3 L2.3 1.3 Q1.3 1.3 1.3 2.3 L1.3 12.9 Q1.3 13.9 2.3 13.9 L12.9 13.9 Q13.9 13.9 13.9 12.9 L13.9 7.2" fill="none" stroke="#ff8000" stroke-width="2.3"/><path d="M5.4 9.7 L10.9 4.2" stroke="#ff8000" stroke-width="3.4"/><path d="M3.4 11.8 L4.1 8.6 L6.6 11.1 Z" fill="#ff8000"/><path d="M12.2 2.9 L13 2.1" stroke="#ff8000" stroke-width="3.2" stroke-linecap="round"/></svg>
</div>
<div class="abs" style="left:1335.5px;top:213.0px;width:16.5px;height:379.0px;background:#f0f0f0"></div>
<div class="abs" style="left:1339.5px;top:220px;width:0;height:0;border-left:4px solid transparent;border-right:4px solid transparent;border-bottom:4px solid #a3a3a3"></div>
<div class="abs" style="left:1337px;top:231px;width:13px;height:119px;background:#c1c1c1"></div>
<div class="abs" style="left:1339.5px;top:580.5px;width:0;height:0;border-left:4.0px solid transparent;border-right:4.0px solid transparent;border-top:4px solid #505050"></div>
<div class="abs" style="left:5.5px;top:592px;width:1330px;height:17px;background:#f0f0f0"></div>
<div class="abs" style="left:12px;top:596.5px;width:0;height:0;border-top:4px solid transparent;border-bottom:4px solid transparent;border-right:4px solid #a3a3a3"></div>
<div class="abs" style="left:23.3px;top:594px;width:1201.5px;height:12.7px;background:#c1c1c1"></div>
<div class="abs" style="left:1325.5px;top:596.5px;width:0;height:0;border-top:4px solid transparent;border-bottom:4px solid transparent;border-left:4px solid #505050"></div>
<div class="abs" style="left:1335.5px;top:592px;width:16.5px;height:17px;background:#dcdcdc"></div>
<div class="abs" style="left:5.5px;top:608.5px;width:1330px;height:1px;background:#a8b0b8"></div>
<div class="abs" style="left:5.5px;top:609.5px;width:1330px;height:21.5px;background:#c0c0c0"></div>
<div class="abs" style="left:44px;top:609.5px;width:1px;height:21.5px;background:#d8dadd"></div>
<div class="abs" style="left:82px;top:609.5px;width:1px;height:21.5px;background:#d8dadd"></div>
<div class="abs" style="left:108px;top:609.5px;width:1px;height:21.5px;background:#d8dadd"></div>
<div class="abs" style="left:188px;top:609.5px;width:1px;height:21.5px;background:#d8dadd"></div>
<div class="abs" style="left:278px;top:609.5px;width:1px;height:21.5px;background:#d8dadd"></div>
<div class="abs" style="left:323px;top:609.5px;width:1px;height:21.5px;background:#d8dadd"></div>
<div class="abs" style="left:563px;top:609.5px;width:1px;height:21.5px;background:#d8dadd"></div>
<div class="abs" style="left:693px;top:609.5px;width:1px;height:21.5px;background:#d8dadd"></div>
<div class="abs" style="left:843px;top:609.5px;width:1px;height:21.5px;background:#d8dadd"></div>
<div class="abs" style="left:959px;top:609.5px;width:1px;height:21.5px;background:#d8dadd"></div>
<div class="abs" style="left:1049px;top:609.5px;width:1px;height:21.5px;background:#d8dadd"></div>
<div class="abs" style="left:1188px;top:609.5px;width:1px;height:21.5px;background:#d8dadd"></div>
<div class="abs" style="left:1288px;top:609.5px;width:1px;height:21.5px;background:#d8dadd"></div>
<div class="abs" style="left:1335.5px;top:609.5px;width:16.5px;height:21.5px;background:#f0f1f3"></div>
<div class="t" style="top:613.84px;font-size:12px;color:#333;left:13.00px;">Totais:</div>
<div class="t" style="top:613.84px;font-size:12px;color:#333;right:402.60px;letter-spacing:0.150px;">416.516,04</div>
<div class="abs" style="left:5px;top:187.5px;width:1348px;height:445px;border:1px solid #9ea7b0;border-top:none"></div>
<div class="abs" style="left:422px;top:53px;width:86px;height:22px;background:#22344a"></div>
<div class="t" id="f34" style="top:58.24px;font-size:12px;color:#fff;left:177.30px;letter-spacing:-0.292px;-webkit-text-stroke:0.2px #fff;">Ações</div>
<div class="abs" style="left:214.8px;top:60px;width:0;height:0;border-left:4.0px solid transparent;border-right:4.0px solid transparent;border-top:4px solid #fff"></div>
<div class="t" id="f35" style="top:58.24px;font-size:12px;color:#fff;left:232.40px;letter-spacing:-0.084px;-webkit-text-stroke:0.2px #fff;">Consultar</div>
<div class="abs" style="left:289px;top:60px;width:0;height:0;border-left:4.0px solid transparent;border-right:4.0px solid transparent;border-top:4px solid #fff"></div>
<div class="t" id="f36" style="top:58.24px;font-size:12px;color:#fff;left:306.20px;letter-spacing:0.389px;-webkit-text-stroke:0.2px #fff;">Imprimir/exportar</div>
<div class="abs" style="left:410px;top:60px;width:0;height:0;border-left:4.0px solid transparent;border-right:4.0px solid transparent;border-top:4px solid #fff"></div>
<div class="t" id="f37" style="top:58.24px;font-size:12px;color:#fff;left:426.40px;letter-spacing:-0.224px;-webkit-text-stroke:0.2px #fff;">NF-e/NFC-e</div>
<div class="abs" style="left:495px;top:60px;width:0;height:0;border-left:4.0px solid transparent;border-right:4.0px solid transparent;border-top:4px solid #fff"></div>
<div class="t" id="f38" style="top:58.24px;font-size:12px;color:#fff;left:512.00px;letter-spacing:-0.414px;-webkit-text-stroke:0.2px #fff;">NFS-e</div>
<div class="abs" style="left:548px;top:60px;width:0;height:0;border-left:4.0px solid transparent;border-right:4.0px solid transparent;border-top:4px solid #fff"></div>
<svg class="abs" style="left:563px;top:56.5px" width="16" height="16" viewBox="0 0 16 16"><defs><linearGradient id="hg" x1="0" y1="0" x2="0" y2="1"><stop offset="0" stop-color="#7aaee8"/><stop offset="0.5" stop-color="#3d7bd0"/><stop offset="1" stop-color="#2a62c0"/></linearGradient></defs><circle cx="8" cy="8.2" r="7.3" fill="url(#hg)" stroke="#2450a0" stroke-width="0.7"/><text x="8" y="12.6" text-anchor="middle" font-family="Liberation Sans" font-size="11.5" font-weight="bold" fill="#fff">?</text></svg>
<div class="abs" style="left:589px;top:60px;width:0;height:0;border-left:4.0px solid transparent;border-right:4.0px solid transparent;border-top:4px solid #fff"></div>
<div class="abs" style="left:420px;top:72.5px;width:391px;height:145.5px;background:#263a52;box-shadow:1px 1px 2px rgba(0,0,0,0.35)"></div>
<div class="abs" style="left:420px;top:94px;width:391px;height:17px;background:#22344a"></div>
<div class="t" style="top:76.74px;font-size:12px;color:#fff;left:425.80px;-webkit-text-stroke:0.2px #fff;">Verificar e atualizar situação da NF-e/NFC-e selecionada junto à Sefaz</div>
<div class="t" style="top:95.74px;font-size:12px;color:#fff;left:425.80px;-webkit-text-stroke:0.2px #fff;">Verificar status do serviço de NF-e junto à Sefaz</div>
<div class="t" style="top:118.64px;font-size:12px;color:#fff;left:425.80px;-webkit-text-stroke:0.2px #fff;">Baixar NF-es/NFC-es (XMLs e PDFs) por período</div>
<div class="t" style="top:137.54px;font-size:12px;color:#fff;left:425.80px;-webkit-text-stroke:0.2px #fff;">Baixar NF-es/NFC-es (XMLs e PDFs) selecionadas</div>
<div class="t" style="top:156.74px;font-size:12px;color:#fff;left:425.80px;-webkit-text-stroke:0.2px #fff;">Baixar XMLs de inutilização de NF-e/NFC-e</div>
<div class="t" style="top:179.64px;font-size:12px;color:#fff;left:425.80px;-webkit-text-stroke:0.2px #fff;">Inutilizar uma faixa de NF-e/NFC-e</div>
<div class="t" style="top:202.44px;font-size:12px;color:#fff;left:425.80px;-webkit-text-stroke:0.2px #fff;">Importar XML de NF-e/NFC-e emitida por outro aplicativo</div>
<div class="abs" style="left:420px;top:172.2px;width:391px;height:1px;background:#1a2838"></div>
<div class="abs" style="left:420px;top:173.2px;width:391px;height:1.3px;background:#c3c9d0"></div>
<div class="abs" style="left:420px;top:195.4px;width:391px;height:1px;background:#1a2838"></div>
<div class="abs" style="left:420px;top:196.4px;width:391px;height:1.3px;background:#c3c9d0"></div>
<div class="abs" style="left:418.2px;top:51.5px;width:91.4px;height:24px;border:4.5px solid #ff0000;border-radius:3px"></div>
<div class="abs" style="left:418px;top:89px;width:396px;height:27px;border:5px solid #ff0000;border-radius:3px"></div>
</body></html>
